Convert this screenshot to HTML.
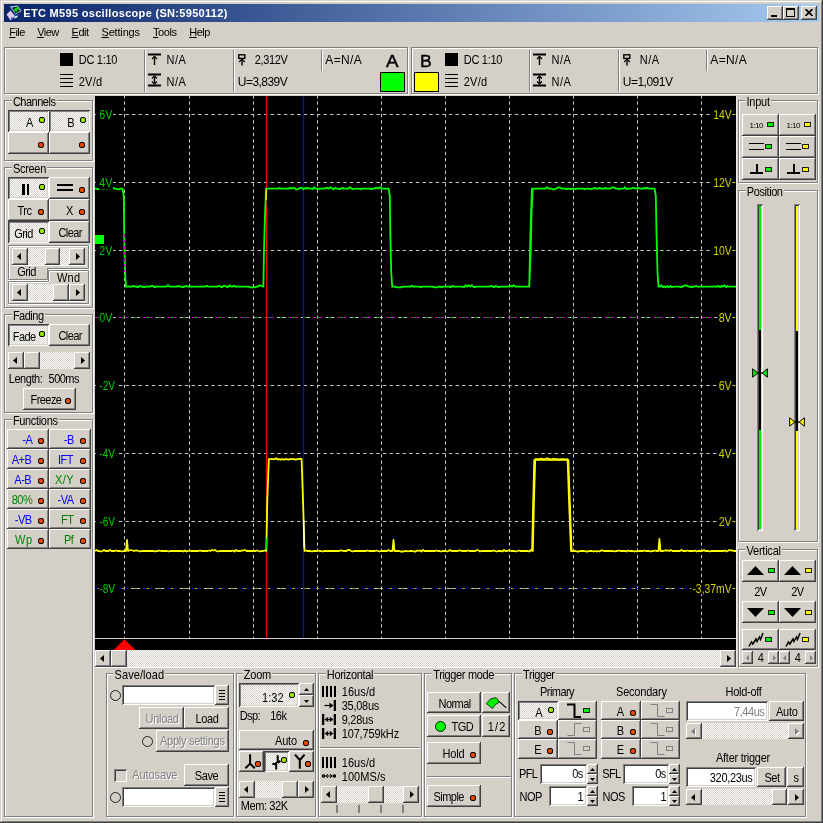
<!DOCTYPE html>
<html lang="en"><head><meta charset="utf-8"><title>ETC M595 oscilloscope</title>
<style>
*{box-sizing:border-box;margin:0;padding:0}
html,body{width:823px;height:823px;overflow:hidden}
body{background:#d4d0c8;font:11px "Liberation Sans",sans-serif;color:#000;position:relative}
div,span,svg,i{position:absolute;display:block}
.t{white-space:nowrap;font-style:normal}
u{text-decoration:underline}
.b{background:#d4d0c8;box-shadow:inset -1px -1px #404040,inset 1px 1px #fff,inset -2px -2px #808080,inset 2px 2px #d4d0c8}
.p{background:repeating-conic-gradient(#fff 0% 25%,#d4d0c8 0% 50%) 0 0/2px 2px;box-shadow:inset 1px 1px #404040,inset -1px -1px #fff,inset 2px 2px #808080,inset -2px -2px #d4d0c8}
.k{background:repeating-conic-gradient(#fff 0% 25%,#d4d0c8 0% 50%) 0 0/2px 2px}
.e{background:#fff;box-shadow:inset 1px 1px #808080,inset -1px -1px #fff,inset 2px 2px #404040,inset -2px -2px #d4d0c8}
.g{border:1px solid #808080;box-shadow:1px 1px #fff,inset 1px 1px #fff}
.l{width:6px;height:6px;border:1px solid #000;border-radius:2px}
.r{border:1px solid #202020}
#w{left:0;top:0;width:823px;height:823px;will-change:transform}
.vs{width:1px;background:#808080;box-shadow:1px 0 #fff}
.hs{height:1px;background:#808080;box-shadow:0 1px #fff}
</style></head>
<body>
<div id="w">
<div style="left:0px;top:0px;width:823px;height:823px;box-shadow:inset -1px -1px #404040,inset 1px 1px #d4d0c8,inset -2px -2px #808080,inset 2px 2px #fff"></div>
<div style="left:4px;top:4px;width:815px;height:18px;background:linear-gradient(to right,#0a246a,#a6caf0)"></div>
<svg style="left:6px;top:5px" width="16" height="16" viewBox="0 0 16 16"><polygon points="0.5,9.5 4.5,5.5 9,11 4.5,15.5" fill="#d8cdf0"/><polygon points="9,11 12.5,10.5 10.5,13 8,13.5" fill="#cfe4ff"/><polygon points="4,1.5 11.5,0.5 15.5,6 9.5,9.5" fill="#a8cdf8"/><polygon points="6,2.5 11,1.8 14,6 9.5,8.5" fill="#0a1408"/><path d="M8.2,6.2 L9.5,4.2 L10.2,5.6 L11.6,2.8 L12.2,4.4" stroke="#00e000" stroke-width="1.6" fill="none"/><rect x="5" y="12.5" width="1.3" height="1.3" fill="#2a10ff"/></svg>
<span class="t" style="left:23.30px;top:7px;line-height:13px;color:#fff;font-weight:bold;letter-spacing:0.31px;">ETC M595 oscilloscope (SN:5950112)</span>
<div class="b" style="left:767px;top:6px;width:16px;height:14px;"></div>
<div class="b" style="left:783px;top:6px;width:16px;height:14px;"></div>
<div class="b" style="left:801px;top:6px;width:16px;height:14px;"></div>
<div style="left:771px;top:15px;width:6px;height:2px;background:#000"></div>
<div style="left:786px;top:8px;width:9px;height:9px;border:1px solid #000;border-top-width:2px"></div>
<svg style="left:805px;top:9px" width="8" height="7"><path d="M0.5,0 L7.5,7 M7.5,0 L0.5,7" stroke="#000" stroke-width="1.6"/></svg>
<span class="t" style="left:9.25px;top:26px;line-height:13px;letter-spacing:-0.55px;"><u>F</u>ile</span>
<span class="t" style="left:37.20px;top:26px;line-height:13px;letter-spacing:-0.55px;"><u>V</u>iew</span>
<span class="t" style="left:71.60px;top:26px;line-height:13px;letter-spacing:-0.53px;"><u>E</u>dit</span>
<span class="t" style="left:101.50px;top:26px;line-height:13px;letter-spacing:-0.18px;"><u>S</u>ettings</span>
<span class="t" style="left:153.00px;top:26px;line-height:13px;letter-spacing:-0.41px;"><u>T</u>ools</span>
<span class="t" style="left:189.36px;top:26px;line-height:13px;letter-spacing:-0.55px;"><u>H</u>elp</span>
<div class="g" style="left:4px;top:47px;width:404px;height:47px;"></div>
<div class="g" style="left:411px;top:47px;width:407px;height:47px;"></div>
<div style="left:60px;top:53px;width:13px;height:13px;background:#000"></div>
<div style="left:60px;top:74px;width:13px;height:1px;background:#000"></div>
<div style="left:60px;top:78px;width:13px;height:1px;background:#000"></div>
<div style="left:60px;top:82px;width:13px;height:1px;background:#000"></div>
<div style="left:60px;top:86px;width:13px;height:1px;background:#000"></div>
<span class="t" style="left:78.80px;top:54px;line-height:13px;letter-spacing:-0.30px;transform:scaleY(1.125);transform-origin:0 10px;">DC 1:10</span>
<span class="t" style="left:78.80px;top:76px;line-height:13px;letter-spacing:0.19px;transform:scaleY(1.125);transform-origin:0 10px;">2V/d</span>
<div class="vs" style="left:144px;top:50px;width:1px;height:42px;"></div>
<svg style="left:148px;top:53px" width="13" height="13"><path d="M0,1.5 H13" stroke="#000" stroke-width="2"/><path d="M6.5,3 V12" stroke="#000" stroke-width="1.4"/><path d="M4,6 L6.5,3.4 L9,6" stroke="#000" stroke-width="1.3" fill="none"/></svg>
<svg style="left:148px;top:73px" width="13" height="14"><path d="M0,1.5 H13 M0,12.5 H13" stroke="#000" stroke-width="2"/><path d="M6.5,3 V11" stroke="#000" stroke-width="1.4"/><path d="M4,5.5 L6.5,3 L9,5.5 M4,8.5 L6.5,11 L9,8.5" stroke="#000" stroke-width="1.2" fill="none"/></svg>
<span class="t" style="left:166.50px;top:54px;line-height:13px;letter-spacing:0.56px;transform:scaleY(1.125);transform-origin:0 10px;">N/A</span>
<span class="t" style="left:166.50px;top:76px;line-height:13px;letter-spacing:0.56px;transform:scaleY(1.125);transform-origin:0 10px;">N/A</span>
<div class="vs" style="left:233px;top:50px;width:1px;height:42px;"></div>
<svg style="left:238px;top:54px" width="8" height="12"><rect x="0.8" y="0.8" width="6" height="3.6" fill="none" stroke="#000" stroke-width="1.4"/><path d="M4,4 V11.5" stroke="#000" stroke-width="1.4"/><path d="M1.2,8 L4,5.2 L6.8,8" stroke="#000" stroke-width="1.2" fill="none"/></svg>
<span class="t" style="left:254.70px;top:54px;line-height:13px;letter-spacing:-0.35px;transform:scaleY(1.125);transform-origin:0 10px;">2,312V</span>
<span class="t" style="left:237.80px;top:75px;line-height:14px;font-size:12px;letter-spacing:-0.54px;">U=3,839V</span>
<div class="vs" style="left:321px;top:50px;width:1px;height:21px;"></div>
<span class="t" style="left:325.30px;top:53px;line-height:14px;font-size:12px;letter-spacing:0.38px;">A=N/A</span>
<div style="left:445px;top:53px;width:13px;height:13px;background:#000"></div>
<div style="left:445px;top:74px;width:13px;height:1px;background:#000"></div>
<div style="left:445px;top:78px;width:13px;height:1px;background:#000"></div>
<div style="left:445px;top:82px;width:13px;height:1px;background:#000"></div>
<div style="left:445px;top:86px;width:13px;height:1px;background:#000"></div>
<span class="t" style="left:463.80px;top:54px;line-height:13px;letter-spacing:-0.30px;transform:scaleY(1.125);transform-origin:0 10px;">DC 1:10</span>
<span class="t" style="left:463.80px;top:76px;line-height:13px;letter-spacing:0.19px;transform:scaleY(1.125);transform-origin:0 10px;">2V/d</span>
<div class="vs" style="left:529px;top:50px;width:1px;height:42px;"></div>
<svg style="left:533px;top:53px" width="13" height="13"><path d="M0,1.5 H13" stroke="#000" stroke-width="2"/><path d="M6.5,3 V12" stroke="#000" stroke-width="1.4"/><path d="M4,6 L6.5,3.4 L9,6" stroke="#000" stroke-width="1.3" fill="none"/></svg>
<svg style="left:533px;top:73px" width="13" height="14"><path d="M0,1.5 H13 M0,12.5 H13" stroke="#000" stroke-width="2"/><path d="M6.5,3 V11" stroke="#000" stroke-width="1.4"/><path d="M4,5.5 L6.5,3 L9,5.5 M4,8.5 L6.5,11 L9,8.5" stroke="#000" stroke-width="1.2" fill="none"/></svg>
<span class="t" style="left:551.50px;top:54px;line-height:13px;letter-spacing:0.56px;transform:scaleY(1.125);transform-origin:0 10px;">N/A</span>
<span class="t" style="left:551.50px;top:76px;line-height:13px;letter-spacing:0.56px;transform:scaleY(1.125);transform-origin:0 10px;">N/A</span>
<div class="vs" style="left:618px;top:50px;width:1px;height:42px;"></div>
<svg style="left:623px;top:54px" width="8" height="12"><rect x="0.8" y="0.8" width="6" height="3.6" fill="none" stroke="#000" stroke-width="1.4"/><path d="M4,4 V11.5" stroke="#000" stroke-width="1.4"/><path d="M1.2,8 L4,5.2 L6.8,8" stroke="#000" stroke-width="1.2" fill="none"/></svg>
<span class="t" style="left:639.70px;top:54px;line-height:13px;letter-spacing:0.56px;transform:scaleY(1.125);transform-origin:0 10px;">N/A</span>
<span class="t" style="left:622.80px;top:75px;line-height:14px;font-size:12px;letter-spacing:-0.51px;">U=1,091V</span>
<div class="vs" style="left:706px;top:50px;width:1px;height:21px;"></div>
<span class="t" style="left:710.30px;top:53px;line-height:14px;font-size:12px;letter-spacing:0.38px;">A=N/A</span>
<span class="t" style="left:386.00px;top:52px;line-height:19px;font-size:17px;-webkit-text-stroke:0.45px #000;transform:scaleX(1.1);transform-origin:0 0;">A</span>
<span class="t" style="left:419.60px;top:52px;line-height:19px;font-size:17px;-webkit-text-stroke:0.45px #000;transform:scaleX(1.03);transform-origin:0 0;">B</span>
<div style="left:380px;top:72px;width:25px;height:20px;background:#00ff00;border:1px solid #000"></div>
<div style="left:414px;top:72px;width:25px;height:20px;background:#ffff00;border:1px solid #000"></div>
<div class="g" style="left:4px;top:100px;width:89px;height:61px;"></div>
<div style="left:11.7px;top:99px;width:45.3px;height:3px;background:#d4d0c8"></div>
<span class="t" style="left:12.90px;top:96px;line-height:13px;letter-spacing:-0.49px;transform:scaleY(1.125);transform-origin:0 10px;">Channels</span>
<div class="p" style="left:8px;top:110px;width:41px;height:22px;"></div>
<span class="t" style="left:26.00px;top:117px;line-height:13px;transform:scaleY(1.125);transform-origin:0 10px;">A</span>
<i class="l" style="left:39px;top:117px;background:#99e600"></i>
<div class="p" style="left:49px;top:110px;width:41px;height:22px;"></div>
<span class="t" style="left:67.30px;top:117px;line-height:13px;transform:scaleY(1.125);transform-origin:0 10px;">B</span>
<i class="l" style="left:80px;top:117px;background:#99e600"></i>
<div class="b" style="left:8px;top:132px;width:41px;height:22px;"></div>
<i class="l" style="left:38px;top:142px;background:#e64a00"></i>
<div class="b" style="left:49px;top:132px;width:41px;height:22px;"></div>
<i class="l" style="left:79px;top:142px;background:#e64a00"></i>
<div class="g" style="left:4px;top:167px;width:89px;height:141px;"></div>
<div style="left:11.7px;top:166px;width:35.6px;height:3px;background:#d4d0c8"></div>
<span class="t" style="left:12.90px;top:163px;line-height:13px;letter-spacing:-0.30px;transform:scaleY(1.125);transform-origin:0 10px;">Screen</span>
<div class="p" style="left:8px;top:177px;width:41px;height:22px;"></div>
<i class="l" style="left:39px;top:184px;background:#99e600"></i>
<div style="left:22px;top:183.5px;width:2.6px;height:11.5px;background:#000"></div>
<div style="left:26.5px;top:183.5px;width:2.6px;height:11.5px;background:#000"></div>
<div class="b" style="left:49px;top:177px;width:41px;height:22px;"></div>
<i class="l" style="left:79px;top:187px;background:#e64a00"></i>
<div style="left:57px;top:184px;width:16px;height:2px;background:#000"></div>
<div style="left:57px;top:189px;width:16px;height:2px;background:#000"></div>
<div class="b" style="left:8px;top:199px;width:41px;height:22px;"></div>
<span class="t" style="left:17.50px;top:205px;line-height:13px;letter-spacing:-0.50px;transform:scaleY(1.125);transform-origin:0 10px;">Trc</span>
<i class="l" style="left:38px;top:209px;background:#e64a00"></i>
<div class="b" style="left:49px;top:199px;width:41px;height:22px;"></div>
<span class="t" style="left:66.00px;top:205px;line-height:13px;transform:scaleY(1.125);transform-origin:0 10px;">X</span>
<i class="l" style="left:79px;top:209px;background:#e64a00"></i>
<div class="p" style="left:8px;top:221px;width:41px;height:22px;"></div>
<span class="t" style="left:14.25px;top:228px;line-height:13px;letter-spacing:-0.55px;transform:scaleY(1.125);transform-origin:0 10px;">Grid</span>
<i class="l" style="left:39px;top:228px;background:#99e600"></i>
<div class="b" style="left:49px;top:221px;width:41px;height:22px;"></div>
<span class="t" style="left:58.38px;top:227px;line-height:13px;letter-spacing:-0.55px;transform:scaleY(1.125);transform-origin:0 10px;">Clear</span>
<svg style="left:8px;top:245px" width="83" height="62"><path d="M0.5,0.5 H80.5 V23.5 H39.5 V34.5 H0.5 Z" fill="none" stroke="#808080"/><path d="M1.5,34 V1.5 H80 M81.5,0 V24.5 H40.5 V35.5 H0" fill="none" stroke="#fff"/><path d="M40.5,25.5 H80.5 V58.5 H0.5 V36.5 H40.5 Z" fill="none" stroke="#808080"/><path d="M41.5,36.5 V26.5 H80 M1.5,58 V37.5 H41 M81.5,25 V59.5 H0" fill="none" stroke="#fff"/></svg>
<div class="k" style="left:12px;top:248px;width:73px;height:17px;"></div>
<div class="b" style="left:12px;top:248px;width:16px;height:17px;"></div>
<div class="b" style="left:69px;top:248px;width:16px;height:17px;"></div>
<svg style="left:17px;top:253.0px" width="4" height="7"><polygon points="4,0 0,3.5 4,7" fill="#000"/></svg>
<svg style="left:76px;top:253.0px" width="4" height="7"><polygon points="0,0 4,3.5 0,7" fill="#000"/></svg>
<div class="b" style="left:45px;top:248px;width:15px;height:17px;"></div>
<div style="left:12px;top:265px;width:74px;height:1px;background:#fff"></div>
<span class="t" style="left:17.25px;top:266px;line-height:13px;letter-spacing:-0.55px;transform:scaleY(1.125);transform-origin:0 10px;">Grid</span>
<span class="t" style="left:57.00px;top:272px;line-height:13px;letter-spacing:0.19px;transform:scaleY(1.125);transform-origin:0 10px;">Wnd</span>
<div class="k" style="left:12px;top:284px;width:73px;height:17px;"></div>
<div class="b" style="left:12px;top:284px;width:16px;height:17px;"></div>
<div class="b" style="left:69px;top:284px;width:16px;height:17px;"></div>
<svg style="left:17px;top:289.0px" width="4" height="7"><polygon points="4,0 0,3.5 4,7" fill="#000"/></svg>
<svg style="left:76px;top:289.0px" width="4" height="7"><polygon points="0,0 4,3.5 0,7" fill="#000"/></svg>
<div class="b" style="left:53px;top:284px;width:16px;height:17px;"></div>
<div style="left:12px;top:301px;width:74px;height:1px;background:#fff"></div>
<div class="g" style="left:4px;top:314px;width:89px;height:99px;"></div>
<div style="left:11.7px;top:313px;width:33.3px;height:3px;background:#d4d0c8"></div>
<span class="t" style="left:12.90px;top:310px;line-height:13px;letter-spacing:-0.50px;transform:scaleY(1.125);transform-origin:0 10px;">Fading</span>
<div class="p" style="left:8px;top:324px;width:41px;height:22px;"></div>
<span class="t" style="left:12.76px;top:331px;line-height:13px;letter-spacing:-0.55px;transform:scaleY(1.125);transform-origin:0 10px;">Fade</span>
<i class="l" style="left:39px;top:331px;background:#99e600"></i>
<div class="b" style="left:49px;top:324px;width:41px;height:22px;"></div>
<span class="t" style="left:58.38px;top:330px;line-height:13px;letter-spacing:-0.55px;transform:scaleY(1.125);transform-origin:0 10px;">Clear</span>
<div class="k" style="left:8px;top:352px;width:82px;height:17px;"></div>
<div class="b" style="left:8px;top:352px;width:16px;height:17px;"></div>
<div class="b" style="left:74px;top:352px;width:16px;height:17px;"></div>
<svg style="left:13px;top:357.0px" width="4" height="7"><polygon points="4,0 0,3.5 4,7" fill="#000"/></svg>
<svg style="left:81px;top:357.0px" width="4" height="7"><polygon points="0,0 4,3.5 0,7" fill="#000"/></svg>
<div class="b" style="left:24px;top:352px;width:16px;height:17px;"></div>
<span class="t" style="left:8.80px;top:373px;line-height:13px;letter-spacing:-0.46px;transform:scaleY(1.125);transform-origin:0 10px;">Length:</span>
<span class="t" style="left:48.60px;top:373px;line-height:13px;letter-spacing:-0.55px;transform:scaleY(1.125);transform-origin:0 10px;">500ms</span>
<div class="b" style="left:23px;top:388px;width:53px;height:22px;"></div>
<span class="t" style="left:30.50px;top:394px;line-height:13px;letter-spacing:-0.55px;transform:scaleY(1.125);transform-origin:0 10px;">Freeze</span>
<i class="l" style="left:65px;top:398px;background:#e64a00"></i>
<div class="g" style="left:4px;top:419px;width:89px;height:398px;"></div>
<div style="left:11.7px;top:418px;width:47.3px;height:3px;background:#d4d0c8"></div>
<span class="t" style="left:12.90px;top:415px;line-height:13px;letter-spacing:-0.33px;transform:scaleY(1.125);transform-origin:0 10px;">Functions</span>
<div class="b" style="left:7px;top:429px;width:42px;height:20px;"></div>
<span class="t" style="left:22.27px;top:434px;line-height:13px;color:#0000ff;letter-spacing:-0.55px;transform:scaleY(1.125);transform-origin:0 10px;">-A</span>
<i class="l" style="left:38px;top:438px;background:#e64a00"></i>
<div class="b" style="left:49px;top:429px;width:42px;height:20px;"></div>
<span class="t" style="left:63.77px;top:434px;line-height:13px;color:#0000ff;letter-spacing:-0.55px;transform:scaleY(1.125);transform-origin:0 10px;">-B</span>
<i class="l" style="left:80px;top:438px;background:#e64a00"></i>
<div class="b" style="left:7px;top:449px;width:42px;height:20px;"></div>
<span class="t" style="left:11.74px;top:454px;line-height:13px;color:#0000ff;letter-spacing:-0.55px;transform:scaleY(1.125);transform-origin:0 10px;">A+B</span>
<i class="l" style="left:38px;top:458px;background:#e64a00"></i>
<div class="b" style="left:49px;top:449px;width:42px;height:20px;"></div>
<span class="t" style="left:58.05px;top:454px;line-height:13px;color:#0000ff;letter-spacing:-0.55px;transform:scaleY(1.125);transform-origin:0 10px;">IFT</span>
<i class="l" style="left:80px;top:458px;background:#e64a00"></i>
<div class="b" style="left:7px;top:469px;width:42px;height:20px;"></div>
<span class="t" style="left:14.36px;top:474px;line-height:13px;color:#0000ff;letter-spacing:-0.55px;transform:scaleY(1.125);transform-origin:0 10px;">A-B</span>
<i class="l" style="left:38px;top:478px;background:#e64a00"></i>
<div class="b" style="left:49px;top:469px;width:42px;height:20px;"></div>
<span class="t" style="left:55.00px;top:474px;line-height:13px;color:#008000;letter-spacing:0.38px;transform:scaleY(1.125);transform-origin:0 10px;">X/Y</span>
<i class="l" style="left:80px;top:478px;background:#e64a00"></i>
<div class="b" style="left:7px;top:489px;width:42px;height:20px;"></div>
<span class="t" style="left:11.80px;top:494px;line-height:13px;color:#008000;letter-spacing:-0.55px;transform:scaleY(1.125);transform-origin:0 10px;">80%</span>
<i class="l" style="left:38px;top:498px;background:#e64a00"></i>
<div class="b" style="left:49px;top:489px;width:42px;height:20px;"></div>
<span class="t" style="left:57.50px;top:494px;line-height:13px;color:#0000ff;letter-spacing:-0.50px;transform:scaleY(1.125);transform-origin:0 10px;">-VA</span>
<i class="l" style="left:80px;top:498px;background:#e64a00"></i>
<div class="b" style="left:7px;top:509px;width:42px;height:20px;"></div>
<span class="t" style="left:14.86px;top:514px;line-height:13px;color:#0000ff;letter-spacing:-0.55px;transform:scaleY(1.125);transform-origin:0 10px;">-VB</span>
<i class="l" style="left:38px;top:518px;background:#e64a00"></i>
<div class="b" style="left:49px;top:509px;width:42px;height:20px;"></div>
<span class="t" style="left:61.02px;top:514px;line-height:13px;color:#008000;letter-spacing:-0.55px;transform:scaleY(1.125);transform-origin:0 10px;">FT</span>
<i class="l" style="left:80px;top:518px;background:#e64a00"></i>
<div class="b" style="left:7px;top:529px;width:42px;height:20px;"></div>
<span class="t" style="left:15.00px;top:534px;line-height:13px;color:#008000;letter-spacing:0.50px;transform:scaleY(1.125);transform-origin:0 10px;">Wp</span>
<i class="l" style="left:38px;top:538px;background:#e64a00"></i>
<div class="b" style="left:49px;top:529px;width:42px;height:20px;"></div>
<span class="t" style="left:64.03px;top:534px;line-height:13px;color:#008000;letter-spacing:-0.55px;transform:scaleY(1.125);transform-origin:0 10px;">Pf</span>
<i class="l" style="left:80px;top:538px;background:#e64a00"></i>
<div class="g" style="left:738px;top:100px;width:80px;height:83px;"></div>
<div style="left:745.3px;top:99px;width:25.7px;height:3px;background:#d4d0c8"></div>
<span class="t" style="left:746.50px;top:96px;line-height:13px;letter-spacing:-0.25px;transform:scaleY(1.125);transform-origin:0 10px;">Input</span>
<div class="b" style="left:742px;top:114px;width:37px;height:22px;"></div>
<div class="b" style="left:742px;top:136px;width:37px;height:22px;"></div>
<div class="b" style="left:742px;top:158px;width:37px;height:22px;"></div>
<span class="t" style="left:749.46px;top:121px;line-height:10px;font-size:8px;letter-spacing:-0.55px;">1:10</span>
<i class="r" style="left:767px;top:122px;width:7px;height:5px;background:#00f000"></i>
<div style="left:749px;top:143px;width:15px;height:1.3px;background:#000"></div>
<div style="left:749px;top:149px;width:15px;height:1.3px;background:#000"></div>
<i class="r" style="left:765px;top:143.6px;width:7px;height:5.8px;background:#00f000"></i>
<div style="left:756px;top:164px;width:2px;height:9px;background:#000"></div>
<div style="left:750px;top:172px;width:13px;height:2.4px;background:#000"></div>
<i class="r" style="left:765px;top:167px;width:7px;height:5px;background:#00f000"></i>
<div class="b" style="left:779px;top:114px;width:37px;height:22px;"></div>
<div class="b" style="left:779px;top:136px;width:37px;height:22px;"></div>
<div class="b" style="left:779px;top:158px;width:37px;height:22px;"></div>
<span class="t" style="left:786.46px;top:121px;line-height:10px;font-size:8px;letter-spacing:-0.55px;">1:10</span>
<i class="r" style="left:804px;top:122px;width:7px;height:5px;background:#ffff00"></i>
<div style="left:786px;top:143px;width:15px;height:1.3px;background:#000"></div>
<div style="left:786px;top:149px;width:15px;height:1.3px;background:#000"></div>
<i class="r" style="left:802px;top:143.6px;width:7px;height:5.8px;background:#ffff00"></i>
<div style="left:793px;top:164px;width:2px;height:9px;background:#000"></div>
<div style="left:787px;top:172px;width:13px;height:2.4px;background:#000"></div>
<i class="r" style="left:802px;top:167px;width:7px;height:5px;background:#ffff00"></i>
<div class="g" style="left:738px;top:190px;width:80px;height:352px;"></div>
<div style="left:745.6px;top:189px;width:38.4px;height:3px;background:#d4d0c8"></div>
<span class="t" style="left:746.80px;top:186px;line-height:13px;letter-spacing:-0.42px;transform:scaleY(1.125);transform-origin:0 10px;">Position</span>
<div class="e" style="left:757px;top:204px;width:6px;height:327px;background:#00e800"></div>
<div style="left:759px;top:330px;width:2px;height:100px;background:#000"></div>
<svg style="left:752px;top:367.6px" width="16" height="10"><polygon points="0.6,0.8 5.8,5 0.6,9.2" fill="#00e800" stroke="#000" stroke-width="1"/><polygon points="15.4,0.8 10.2,5 15.4,9.2" fill="#00e800" stroke="#000" stroke-width="1"/><path d="M5.5,5 H10.5" stroke="#000" stroke-width="1.2"/></svg>
<div class="e" style="left:794px;top:204px;width:6px;height:327px;background:#ffff00"></div>
<div style="left:796px;top:331px;width:2px;height:100px;background:#000"></div>
<svg style="left:789px;top:417.4px" width="16" height="10"><polygon points="0.6,0.8 5.8,5 0.6,9.2" fill="#ffff00" stroke="#000" stroke-width="1"/><polygon points="15.4,0.8 10.2,5 15.4,9.2" fill="#ffff00" stroke="#000" stroke-width="1"/><path d="M5.5,5 H10.5" stroke="#000" stroke-width="1.2"/></svg>
<div class="g" style="left:738px;top:549px;width:80px;height:118px;"></div>
<div style="left:745.3px;top:548px;width:36.7px;height:3px;background:#d4d0c8"></div>
<span class="t" style="left:746.50px;top:545px;line-height:13px;letter-spacing:-0.23px;transform:scaleY(1.125);transform-origin:0 10px;">Vertical</span>
<div class="b" style="left:742px;top:560px;width:37px;height:22px;"></div>
<svg style="left:747px;top:566px" width="17" height="9"><polygon points="0,9 8.5,0 17,9" fill="#000"/></svg>
<i class="r" style="left:768px;top:568px;width:7px;height:5px;background:#00f000"></i>
<span class="t" style="left:754.27px;top:586px;line-height:13px;letter-spacing:-0.55px;transform:scaleY(1.125);transform-origin:0 10px;">2V</span>
<div class="b" style="left:742px;top:601px;width:37px;height:22px;"></div>
<svg style="left:747px;top:608px" width="17" height="9"><polygon points="0,0 8.5,9 17,0" fill="#000"/></svg>
<i class="r" style="left:768px;top:609.5px;width:7px;height:5px;background:#00f000"></i>
<div class="b" style="left:742px;top:629px;width:37px;height:21px;"></div>
<svg style="left:748px;top:632px" width="17" height="16"><path d="M1,14.5 L3.5,10 L4.8,12 L8,7 L9,9.5 L11.5,5 L12.5,7.5 L15,1" stroke="#000" stroke-width="1.5" fill="none"/></svg>
<i class="r" style="left:765px;top:637px;width:7px;height:5px;background:#00f000"></i>
<div class="b" style="left:742px;top:651px;width:11px;height:13px;"></div>
<div class="b" style="left:768px;top:651px;width:11px;height:13px;"></div>
<svg style="left:745.5px;top:654.5px" width="3" height="6"><polygon points="3,0 0,3.0 3,6" fill="#808080"/></svg>
<svg style="left:772.5px;top:654.5px" width="3" height="6"><polygon points="0,0 3,3.0 0,6" fill="#808080"/></svg>
<span class="t" style="left:757.70px;top:652px;line-height:13px;transform:scaleY(1.125);transform-origin:0 10px;">4</span>
<div class="b" style="left:779px;top:560px;width:37px;height:22px;"></div>
<svg style="left:784px;top:566px" width="17" height="9"><polygon points="0,9 8.5,0 17,9" fill="#000"/></svg>
<i class="r" style="left:805px;top:568px;width:7px;height:5px;background:#ffff00"></i>
<span class="t" style="left:791.27px;top:586px;line-height:13px;letter-spacing:-0.55px;transform:scaleY(1.125);transform-origin:0 10px;">2V</span>
<div class="b" style="left:779px;top:601px;width:37px;height:22px;"></div>
<svg style="left:784px;top:608px" width="17" height="9"><polygon points="0,0 8.5,9 17,0" fill="#000"/></svg>
<i class="r" style="left:805px;top:609.5px;width:7px;height:5px;background:#ffff00"></i>
<div class="b" style="left:779px;top:629px;width:37px;height:21px;"></div>
<svg style="left:785px;top:632px" width="17" height="16"><path d="M1,14.5 L3.5,10 L4.8,12 L8,7 L9,9.5 L11.5,5 L12.5,7.5 L15,1" stroke="#000" stroke-width="1.5" fill="none"/></svg>
<i class="r" style="left:802px;top:637px;width:7px;height:5px;background:#ffff00"></i>
<div class="b" style="left:779px;top:651px;width:11px;height:13px;"></div>
<div class="b" style="left:805px;top:651px;width:11px;height:13px;"></div>
<svg style="left:782.5px;top:654.5px" width="3" height="6"><polygon points="3,0 0,3.0 3,6" fill="#808080"/></svg>
<svg style="left:809.5px;top:654.5px" width="3" height="6"><polygon points="0,0 3,3.0 0,6" fill="#808080"/></svg>
<span class="t" style="left:794.70px;top:652px;line-height:13px;transform:scaleY(1.125);transform-origin:0 10px;">4</span>
<svg style="left:95px;top:96px" width="641" height="555" viewBox="95 96 641 555" font-family="Liberation Sans, sans-serif" font-size="12.3"><rect x="95" y="96" width="641" height="542" fill="#000"/><rect x="95" y="638" width="641" height="1" fill="#d4d0c8"/><rect x="95" y="639" width="641" height="11" fill="#000"/><path d="M124.5,96 V638" stroke="#c8c8c8" stroke-dasharray="3.4 2.9" stroke-dashoffset="1"/><path d="M189.5,96 V638" stroke="#c8c8c8" stroke-dasharray="3.4 2.9" stroke-dashoffset="1"/><path d="M253.5,96 V638" stroke="#c8c8c8" stroke-dasharray="3.4 2.9" stroke-dashoffset="1"/><path d="M317.5,96 V638" stroke="#c8c8c8" stroke-dasharray="3.4 2.9" stroke-dashoffset="1"/><path d="M381.5,96 V638" stroke="#c8c8c8" stroke-dasharray="3.4 2.9" stroke-dashoffset="1"/><path d="M445.5,96 V638" stroke="#c8c8c8" stroke-dasharray="3.4 2.9" stroke-dashoffset="1"/><path d="M509.5,96 V638" stroke="#c8c8c8" stroke-dasharray="3.4 2.9" stroke-dashoffset="1"/><path d="M573.5,96 V638" stroke="#c8c8c8" stroke-dasharray="3.4 2.9" stroke-dashoffset="1"/><path d="M637.5,96 V638" stroke="#c8c8c8" stroke-dasharray="3.4 2.9" stroke-dashoffset="1"/><path d="M701.5,96 V638" stroke="#c8c8c8" stroke-dasharray="3.4 2.9" stroke-dashoffset="1"/><path d="M95,114.5 H736" stroke="#c8c8c8" stroke-dasharray="3.4 3.2" stroke-dashoffset="2.5"/><path d="M95,182.5 H736" stroke="#c8c8c8" stroke-dasharray="3.4 3.2" stroke-dashoffset="2.5"/><path d="M95,250.5 H736" stroke="#c8c8c8" stroke-dasharray="3.4 3.2" stroke-dashoffset="2.5"/><path d="M95,385.5 H736" stroke="#c8c8c8" stroke-dasharray="3.4 3.2" stroke-dashoffset="2.5"/><path d="M95,453.5 H736" stroke="#c8c8c8" stroke-dasharray="3.4 3.2" stroke-dashoffset="2.5"/><path d="M95,521.5 H736" stroke="#c8c8c8" stroke-dasharray="3.4 3.2" stroke-dashoffset="2.5"/><path d="M94.6,317.5 h3" stroke="#d000d0"/><path d="M97.6,317.5 h3" stroke="#00a000"/><path d="M100.6,317.5 h3" stroke="#d000d0"/><path d="M106.8,317.5 h3" stroke="#c8c8c8"/><path d="M109.8,317.5 h3" stroke="#00a000"/><path d="M112.8,317.5 h3" stroke="#c8c8c8"/><path d="M118.9,317.5 h3" stroke="#d000d0"/><path d="M121.9,317.5 h3" stroke="#00a000"/><path d="M124.9,317.5 h3" stroke="#d000d0"/><path d="M131.1,317.5 h3" stroke="#c8c8c8"/><path d="M134.1,317.5 h3" stroke="#00a000"/><path d="M137.1,317.5 h3" stroke="#c8c8c8"/><path d="M143.2,317.5 h3" stroke="#d000d0"/><path d="M146.2,317.5 h3" stroke="#00a000"/><path d="M149.2,317.5 h3" stroke="#d000d0"/><path d="M155.4,317.5 h3" stroke="#c8c8c8"/><path d="M158.4,317.5 h3" stroke="#00a000"/><path d="M161.4,317.5 h3" stroke="#c8c8c8"/><path d="M167.5,317.5 h3" stroke="#d000d0"/><path d="M170.5,317.5 h3" stroke="#00a000"/><path d="M173.5,317.5 h3" stroke="#d000d0"/><path d="M179.7,317.5 h3" stroke="#c8c8c8"/><path d="M182.7,317.5 h3" stroke="#00a000"/><path d="M185.7,317.5 h3" stroke="#c8c8c8"/><path d="M191.8,317.5 h3" stroke="#d000d0"/><path d="M194.8,317.5 h3" stroke="#00a000"/><path d="M197.8,317.5 h3" stroke="#d000d0"/><path d="M204.0,317.5 h3" stroke="#c8c8c8"/><path d="M207.0,317.5 h3" stroke="#00a000"/><path d="M210.0,317.5 h3" stroke="#c8c8c8"/><path d="M216.1,317.5 h3" stroke="#d000d0"/><path d="M219.1,317.5 h3" stroke="#00a000"/><path d="M222.1,317.5 h3" stroke="#d000d0"/><path d="M228.3,317.5 h3" stroke="#c8c8c8"/><path d="M231.3,317.5 h3" stroke="#00a000"/><path d="M234.3,317.5 h3" stroke="#c8c8c8"/><path d="M240.4,317.5 h3" stroke="#d000d0"/><path d="M243.4,317.5 h3" stroke="#00a000"/><path d="M246.4,317.5 h3" stroke="#d000d0"/><path d="M252.6,317.5 h3" stroke="#c8c8c8"/><path d="M255.6,317.5 h3" stroke="#00a000"/><path d="M258.6,317.5 h3" stroke="#c8c8c8"/><path d="M264.7,317.5 h3" stroke="#d000d0"/><path d="M267.7,317.5 h3" stroke="#00a000"/><path d="M270.7,317.5 h3" stroke="#d000d0"/><path d="M276.9,317.5 h3" stroke="#c8c8c8"/><path d="M279.9,317.5 h3" stroke="#00a000"/><path d="M282.9,317.5 h3" stroke="#c8c8c8"/><path d="M289.0,317.5 h3" stroke="#d000d0"/><path d="M292.0,317.5 h3" stroke="#00a000"/><path d="M295.0,317.5 h3" stroke="#d000d0"/><path d="M301.1,317.5 h3" stroke="#c8c8c8"/><path d="M304.1,317.5 h3" stroke="#00a000"/><path d="M307.1,317.5 h3" stroke="#c8c8c8"/><path d="M313.3,317.5 h3" stroke="#d000d0"/><path d="M316.3,317.5 h3" stroke="#00a000"/><path d="M319.3,317.5 h3" stroke="#d000d0"/><path d="M325.4,317.5 h3" stroke="#c8c8c8"/><path d="M328.4,317.5 h3" stroke="#00a000"/><path d="M331.4,317.5 h3" stroke="#c8c8c8"/><path d="M337.6,317.5 h3" stroke="#d000d0"/><path d="M340.6,317.5 h3" stroke="#00a000"/><path d="M343.6,317.5 h3" stroke="#d000d0"/><path d="M349.7,317.5 h3" stroke="#c8c8c8"/><path d="M352.7,317.5 h3" stroke="#00a000"/><path d="M355.7,317.5 h3" stroke="#c8c8c8"/><path d="M361.9,317.5 h3" stroke="#d000d0"/><path d="M364.9,317.5 h3" stroke="#00a000"/><path d="M367.9,317.5 h3" stroke="#d000d0"/><path d="M374.0,317.5 h3" stroke="#c8c8c8"/><path d="M377.0,317.5 h3" stroke="#00a000"/><path d="M380.0,317.5 h3" stroke="#c8c8c8"/><path d="M386.2,317.5 h3" stroke="#d000d0"/><path d="M389.2,317.5 h3" stroke="#00a000"/><path d="M392.2,317.5 h3" stroke="#d000d0"/><path d="M398.3,317.5 h3" stroke="#c8c8c8"/><path d="M401.3,317.5 h3" stroke="#00a000"/><path d="M404.3,317.5 h3" stroke="#c8c8c8"/><path d="M410.5,317.5 h3" stroke="#d000d0"/><path d="M413.5,317.5 h3" stroke="#00a000"/><path d="M416.5,317.5 h3" stroke="#d000d0"/><path d="M422.6,317.5 h3" stroke="#c8c8c8"/><path d="M425.6,317.5 h3" stroke="#00a000"/><path d="M428.6,317.5 h3" stroke="#c8c8c8"/><path d="M434.8,317.5 h3" stroke="#d000d0"/><path d="M437.8,317.5 h3" stroke="#00a000"/><path d="M440.8,317.5 h3" stroke="#d000d0"/><path d="M446.9,317.5 h3" stroke="#c8c8c8"/><path d="M449.9,317.5 h3" stroke="#00a000"/><path d="M452.9,317.5 h3" stroke="#c8c8c8"/><path d="M459.1,317.5 h3" stroke="#d000d0"/><path d="M462.1,317.5 h3" stroke="#00a000"/><path d="M465.1,317.5 h3" stroke="#d000d0"/><path d="M471.2,317.5 h3" stroke="#c8c8c8"/><path d="M474.2,317.5 h3" stroke="#00a000"/><path d="M477.2,317.5 h3" stroke="#c8c8c8"/><path d="M483.4,317.5 h3" stroke="#d000d0"/><path d="M486.4,317.5 h3" stroke="#00a000"/><path d="M489.4,317.5 h3" stroke="#d000d0"/><path d="M495.5,317.5 h3" stroke="#c8c8c8"/><path d="M498.5,317.5 h3" stroke="#00a000"/><path d="M501.5,317.5 h3" stroke="#c8c8c8"/><path d="M507.7,317.5 h3" stroke="#d000d0"/><path d="M510.7,317.5 h3" stroke="#00a000"/><path d="M513.7,317.5 h3" stroke="#d000d0"/><path d="M519.8,317.5 h3" stroke="#c8c8c8"/><path d="M522.8,317.5 h3" stroke="#00a000"/><path d="M525.8,317.5 h3" stroke="#c8c8c8"/><path d="M532.0,317.5 h3" stroke="#d000d0"/><path d="M535.0,317.5 h3" stroke="#00a000"/><path d="M538.0,317.5 h3" stroke="#d000d0"/><path d="M544.1,317.5 h3" stroke="#c8c8c8"/><path d="M547.1,317.5 h3" stroke="#00a000"/><path d="M550.1,317.5 h3" stroke="#c8c8c8"/><path d="M556.3,317.5 h3" stroke="#d000d0"/><path d="M559.3,317.5 h3" stroke="#00a000"/><path d="M562.3,317.5 h3" stroke="#d000d0"/><path d="M568.4,317.5 h3" stroke="#c8c8c8"/><path d="M571.4,317.5 h3" stroke="#00a000"/><path d="M574.4,317.5 h3" stroke="#c8c8c8"/><path d="M580.6,317.5 h3" stroke="#d000d0"/><path d="M583.6,317.5 h3" stroke="#00a000"/><path d="M586.6,317.5 h3" stroke="#d000d0"/><path d="M592.7,317.5 h3" stroke="#c8c8c8"/><path d="M595.7,317.5 h3" stroke="#00a000"/><path d="M598.7,317.5 h3" stroke="#c8c8c8"/><path d="M604.9,317.5 h3" stroke="#d000d0"/><path d="M607.9,317.5 h3" stroke="#00a000"/><path d="M610.9,317.5 h3" stroke="#d000d0"/><path d="M617.0,317.5 h3" stroke="#c8c8c8"/><path d="M620.0,317.5 h3" stroke="#00a000"/><path d="M623.0,317.5 h3" stroke="#c8c8c8"/><path d="M629.2,317.5 h3" stroke="#d000d0"/><path d="M632.2,317.5 h3" stroke="#00a000"/><path d="M635.2,317.5 h3" stroke="#d000d0"/><path d="M641.3,317.5 h3" stroke="#c8c8c8"/><path d="M644.3,317.5 h3" stroke="#00a000"/><path d="M647.3,317.5 h3" stroke="#c8c8c8"/><path d="M653.5,317.5 h3" stroke="#d000d0"/><path d="M656.5,317.5 h3" stroke="#00a000"/><path d="M659.5,317.5 h3" stroke="#d000d0"/><path d="M665.6,317.5 h3" stroke="#c8c8c8"/><path d="M668.6,317.5 h3" stroke="#00a000"/><path d="M671.6,317.5 h3" stroke="#c8c8c8"/><path d="M677.8,317.5 h3" stroke="#d000d0"/><path d="M680.8,317.5 h3" stroke="#00a000"/><path d="M683.8,317.5 h3" stroke="#d000d0"/><path d="M689.9,317.5 h3" stroke="#c8c8c8"/><path d="M692.9,317.5 h3" stroke="#00a000"/><path d="M695.9,317.5 h3" stroke="#c8c8c8"/><path d="M702.1,317.5 h3" stroke="#d000d0"/><path d="M705.1,317.5 h3" stroke="#00a000"/><path d="M708.1,317.5 h3" stroke="#d000d0"/><path d="M714.2,317.5 h3" stroke="#c8c8c8"/><path d="M717.2,317.5 h3" stroke="#00a000"/><path d="M720.2,317.5 h3" stroke="#c8c8c8"/><path d="M726.4,317.5 h3" stroke="#d000d0"/><path d="M729.4,317.5 h3" stroke="#00a000"/><path d="M732.4,317.5 h3" stroke="#d000d0"/><path d="M94.6,588.5 h3" stroke="#0000d8"/><path d="M97.6,588.5 h3" stroke="#b0a000"/><path d="M100.6,588.5 h3" stroke="#0000d8"/><path d="M106.8,588.5 h3" stroke="#c8c8c8"/><path d="M109.8,588.5 h3" stroke="#b0a000"/><path d="M112.8,588.5 h3" stroke="#c8c8c8"/><path d="M118.9,588.5 h3" stroke="#0000d8"/><path d="M121.9,588.5 h3" stroke="#b0a000"/><path d="M124.9,588.5 h3" stroke="#0000d8"/><path d="M131.1,588.5 h3" stroke="#c8c8c8"/><path d="M134.1,588.5 h3" stroke="#b0a000"/><path d="M137.1,588.5 h3" stroke="#c8c8c8"/><path d="M143.2,588.5 h3" stroke="#0000d8"/><path d="M146.2,588.5 h3" stroke="#b0a000"/><path d="M149.2,588.5 h3" stroke="#0000d8"/><path d="M155.4,588.5 h3" stroke="#c8c8c8"/><path d="M158.4,588.5 h3" stroke="#b0a000"/><path d="M161.4,588.5 h3" stroke="#c8c8c8"/><path d="M167.5,588.5 h3" stroke="#0000d8"/><path d="M170.5,588.5 h3" stroke="#b0a000"/><path d="M173.5,588.5 h3" stroke="#0000d8"/><path d="M179.7,588.5 h3" stroke="#c8c8c8"/><path d="M182.7,588.5 h3" stroke="#b0a000"/><path d="M185.7,588.5 h3" stroke="#c8c8c8"/><path d="M191.8,588.5 h3" stroke="#0000d8"/><path d="M194.8,588.5 h3" stroke="#b0a000"/><path d="M197.8,588.5 h3" stroke="#0000d8"/><path d="M204.0,588.5 h3" stroke="#c8c8c8"/><path d="M207.0,588.5 h3" stroke="#b0a000"/><path d="M210.0,588.5 h3" stroke="#c8c8c8"/><path d="M216.1,588.5 h3" stroke="#0000d8"/><path d="M219.1,588.5 h3" stroke="#b0a000"/><path d="M222.1,588.5 h3" stroke="#0000d8"/><path d="M228.3,588.5 h3" stroke="#c8c8c8"/><path d="M231.3,588.5 h3" stroke="#b0a000"/><path d="M234.3,588.5 h3" stroke="#c8c8c8"/><path d="M240.4,588.5 h3" stroke="#0000d8"/><path d="M243.4,588.5 h3" stroke="#b0a000"/><path d="M246.4,588.5 h3" stroke="#0000d8"/><path d="M252.6,588.5 h3" stroke="#c8c8c8"/><path d="M255.6,588.5 h3" stroke="#b0a000"/><path d="M258.6,588.5 h3" stroke="#c8c8c8"/><path d="M264.7,588.5 h3" stroke="#0000d8"/><path d="M267.7,588.5 h3" stroke="#b0a000"/><path d="M270.7,588.5 h3" stroke="#0000d8"/><path d="M276.9,588.5 h3" stroke="#c8c8c8"/><path d="M279.9,588.5 h3" stroke="#b0a000"/><path d="M282.9,588.5 h3" stroke="#c8c8c8"/><path d="M289.0,588.5 h3" stroke="#0000d8"/><path d="M292.0,588.5 h3" stroke="#b0a000"/><path d="M295.0,588.5 h3" stroke="#0000d8"/><path d="M301.1,588.5 h3" stroke="#c8c8c8"/><path d="M304.1,588.5 h3" stroke="#b0a000"/><path d="M307.1,588.5 h3" stroke="#c8c8c8"/><path d="M313.3,588.5 h3" stroke="#0000d8"/><path d="M316.3,588.5 h3" stroke="#b0a000"/><path d="M319.3,588.5 h3" stroke="#0000d8"/><path d="M325.4,588.5 h3" stroke="#c8c8c8"/><path d="M328.4,588.5 h3" stroke="#b0a000"/><path d="M331.4,588.5 h3" stroke="#c8c8c8"/><path d="M337.6,588.5 h3" stroke="#0000d8"/><path d="M340.6,588.5 h3" stroke="#b0a000"/><path d="M343.6,588.5 h3" stroke="#0000d8"/><path d="M349.7,588.5 h3" stroke="#c8c8c8"/><path d="M352.7,588.5 h3" stroke="#b0a000"/><path d="M355.7,588.5 h3" stroke="#c8c8c8"/><path d="M361.9,588.5 h3" stroke="#0000d8"/><path d="M364.9,588.5 h3" stroke="#b0a000"/><path d="M367.9,588.5 h3" stroke="#0000d8"/><path d="M374.0,588.5 h3" stroke="#c8c8c8"/><path d="M377.0,588.5 h3" stroke="#b0a000"/><path d="M380.0,588.5 h3" stroke="#c8c8c8"/><path d="M386.2,588.5 h3" stroke="#0000d8"/><path d="M389.2,588.5 h3" stroke="#b0a000"/><path d="M392.2,588.5 h3" stroke="#0000d8"/><path d="M398.3,588.5 h3" stroke="#c8c8c8"/><path d="M401.3,588.5 h3" stroke="#b0a000"/><path d="M404.3,588.5 h3" stroke="#c8c8c8"/><path d="M410.5,588.5 h3" stroke="#0000d8"/><path d="M413.5,588.5 h3" stroke="#b0a000"/><path d="M416.5,588.5 h3" stroke="#0000d8"/><path d="M422.6,588.5 h3" stroke="#c8c8c8"/><path d="M425.6,588.5 h3" stroke="#b0a000"/><path d="M428.6,588.5 h3" stroke="#c8c8c8"/><path d="M434.8,588.5 h3" stroke="#0000d8"/><path d="M437.8,588.5 h3" stroke="#b0a000"/><path d="M440.8,588.5 h3" stroke="#0000d8"/><path d="M446.9,588.5 h3" stroke="#c8c8c8"/><path d="M449.9,588.5 h3" stroke="#b0a000"/><path d="M452.9,588.5 h3" stroke="#c8c8c8"/><path d="M459.1,588.5 h3" stroke="#0000d8"/><path d="M462.1,588.5 h3" stroke="#b0a000"/><path d="M465.1,588.5 h3" stroke="#0000d8"/><path d="M471.2,588.5 h3" stroke="#c8c8c8"/><path d="M474.2,588.5 h3" stroke="#b0a000"/><path d="M477.2,588.5 h3" stroke="#c8c8c8"/><path d="M483.4,588.5 h3" stroke="#0000d8"/><path d="M486.4,588.5 h3" stroke="#b0a000"/><path d="M489.4,588.5 h3" stroke="#0000d8"/><path d="M495.5,588.5 h3" stroke="#c8c8c8"/><path d="M498.5,588.5 h3" stroke="#b0a000"/><path d="M501.5,588.5 h3" stroke="#c8c8c8"/><path d="M507.7,588.5 h3" stroke="#0000d8"/><path d="M510.7,588.5 h3" stroke="#b0a000"/><path d="M513.7,588.5 h3" stroke="#0000d8"/><path d="M519.8,588.5 h3" stroke="#c8c8c8"/><path d="M522.8,588.5 h3" stroke="#b0a000"/><path d="M525.8,588.5 h3" stroke="#c8c8c8"/><path d="M532.0,588.5 h3" stroke="#0000d8"/><path d="M535.0,588.5 h3" stroke="#b0a000"/><path d="M538.0,588.5 h3" stroke="#0000d8"/><path d="M544.1,588.5 h3" stroke="#c8c8c8"/><path d="M547.1,588.5 h3" stroke="#b0a000"/><path d="M550.1,588.5 h3" stroke="#c8c8c8"/><path d="M556.3,588.5 h3" stroke="#0000d8"/><path d="M559.3,588.5 h3" stroke="#b0a000"/><path d="M562.3,588.5 h3" stroke="#0000d8"/><path d="M568.4,588.5 h3" stroke="#c8c8c8"/><path d="M571.4,588.5 h3" stroke="#b0a000"/><path d="M574.4,588.5 h3" stroke="#c8c8c8"/><path d="M580.6,588.5 h3" stroke="#0000d8"/><path d="M583.6,588.5 h3" stroke="#b0a000"/><path d="M586.6,588.5 h3" stroke="#0000d8"/><path d="M592.7,588.5 h3" stroke="#c8c8c8"/><path d="M595.7,588.5 h3" stroke="#b0a000"/><path d="M598.7,588.5 h3" stroke="#c8c8c8"/><path d="M604.9,588.5 h3" stroke="#0000d8"/><path d="M607.9,588.5 h3" stroke="#b0a000"/><path d="M610.9,588.5 h3" stroke="#0000d8"/><path d="M617.0,588.5 h3" stroke="#c8c8c8"/><path d="M620.0,588.5 h3" stroke="#b0a000"/><path d="M623.0,588.5 h3" stroke="#c8c8c8"/><path d="M629.2,588.5 h3" stroke="#0000d8"/><path d="M632.2,588.5 h3" stroke="#b0a000"/><path d="M635.2,588.5 h3" stroke="#0000d8"/><path d="M641.3,588.5 h3" stroke="#c8c8c8"/><path d="M644.3,588.5 h3" stroke="#b0a000"/><path d="M647.3,588.5 h3" stroke="#c8c8c8"/><path d="M653.5,588.5 h3" stroke="#0000d8"/><path d="M656.5,588.5 h3" stroke="#b0a000"/><path d="M659.5,588.5 h3" stroke="#0000d8"/><path d="M665.6,588.5 h3" stroke="#c8c8c8"/><path d="M668.6,588.5 h3" stroke="#b0a000"/><path d="M671.6,588.5 h3" stroke="#c8c8c8"/><path d="M677.8,588.5 h3" stroke="#0000d8"/><path d="M680.8,588.5 h3" stroke="#b0a000"/><path d="M683.8,588.5 h3" stroke="#0000d8"/><path d="M689.9,588.5 h3" stroke="#c8c8c8"/><path d="M692.9,588.5 h3" stroke="#b0a000"/><path d="M695.9,588.5 h3" stroke="#c8c8c8"/><path d="M702.1,588.5 h3" stroke="#0000d8"/><path d="M705.1,588.5 h3" stroke="#b0a000"/><path d="M708.1,588.5 h3" stroke="#0000d8"/><path d="M714.2,588.5 h3" stroke="#c8c8c8"/><path d="M717.2,588.5 h3" stroke="#b0a000"/><path d="M720.2,588.5 h3" stroke="#c8c8c8"/><path d="M726.4,588.5 h3" stroke="#0000d8"/><path d="M729.4,588.5 h3" stroke="#b0a000"/><path d="M732.4,588.5 h3" stroke="#0000d8"/><path d="M266.5,96 V638" stroke="#ff0000" stroke-width="1.2"/><path d="M303.5,96 V638" stroke="#0000ff" stroke-width="1.2"/><path d="M95.0,188.6 L96.5,188.6 L98.0,189.3 L99.5,188.6 L101.0,187.9 L102.5,188.6 L104.0,188.6 L105.5,187.9 L107.0,188.6 L108.5,187.9 L110.0,188.6 L111.5,187.9 L113.0,187.9 L114.5,188.6 L116.0,188.6 L117.5,189.3 L119.0,189.3 L120.5,188.6 L122.5,188.6 L123.8,196.0 L124.2,233.0 L125.0,272.0 L126.0,286.6 L127.5,286.6 L129.0,286.6 L130.5,286.6 L132.0,286.6 L133.5,285.9 L135.0,286.6 L136.5,286.6 L138.0,287.3 L139.5,285.9 L141.0,286.6 L142.5,286.6 L144.0,287.3 L145.5,286.6 L147.0,286.6 L148.5,286.6 L150.0,286.6 L151.5,285.9 L153.0,285.9 L154.5,287.3 L156.0,286.6 L157.5,286.6 L159.0,286.6 L160.5,286.6 L162.0,286.6 L163.5,286.6 L165.0,286.6 L166.5,286.6 L168.0,285.2 L169.5,286.6 L171.0,286.6 L172.5,286.6 L174.0,286.6 L175.5,286.6 L177.0,286.6 L178.5,285.9 L180.0,286.6 L181.5,286.6 L183.0,287.3 L184.5,286.6 L186.0,285.9 L187.5,286.6 L189.0,286.6 L190.5,286.6 L192.0,286.6 L193.5,286.6 L195.0,286.6 L196.5,286.6 L198.0,286.6 L199.5,286.6 L201.0,286.6 L202.5,286.6 L204.0,286.6 L205.5,286.6 L207.0,285.9 L208.5,286.6 L210.0,286.6 L211.5,286.6 L213.0,286.6 L214.5,286.6 L216.0,286.6 L217.5,286.6 L219.0,285.9 L220.5,286.6 L222.0,287.3 L223.5,285.9 L225.0,285.9 L226.5,286.6 L228.0,287.3 L229.5,285.2 L231.0,286.6 L232.5,286.6 L234.0,285.9 L235.5,286.6 L237.0,286.6 L238.5,286.6 L240.0,286.6 L241.5,286.6 L243.0,286.6 L244.5,286.6 L246.0,286.6 L247.5,286.6 L249.0,286.6 L250.5,287.3 L252.0,287.3 L253.5,287.3 L255.0,287.3 L256.5,286.6 L258.0,286.6 L259.5,285.2 L261.0,285.9 L263.4,286.6 L264.0,250.0 L265.0,215.0 L266.0,188.6 L267.5,188.6 L269.0,188.6 L270.5,188.6 L272.0,188.6 L273.5,188.6 L275.0,188.6 L276.5,188.6 L278.0,188.6 L279.5,187.9 L281.0,188.6 L282.5,188.6 L284.0,188.6 L285.5,188.6 L287.0,188.6 L288.5,188.6 L290.0,187.9 L291.5,188.6 L293.0,187.9 L294.5,187.9 L296.0,189.3 L297.5,189.3 L299.0,188.6 L300.5,187.9 L302.0,187.9 L303.5,189.3 L305.0,187.9 L306.5,188.6 L308.0,187.9 L309.5,188.6 L311.0,188.6 L312.5,189.3 L314.0,187.2 L315.5,188.6 L317.0,188.6 L318.5,189.3 L320.0,188.6 L321.5,188.6 L323.0,188.6 L324.5,188.6 L326.0,187.9 L327.5,187.9 L329.0,188.6 L330.5,187.2 L332.0,188.6 L333.5,189.3 L335.0,187.9 L336.5,188.6 L338.0,188.6 L339.5,189.3 L341.0,188.6 L342.5,187.9 L344.0,188.6 L345.5,188.6 L347.0,188.6 L348.5,188.6 L350.0,187.2 L351.5,188.6 L353.0,189.3 L354.5,188.6 L356.0,188.6 L357.5,188.6 L359.0,188.6 L360.5,189.3 L362.0,188.6 L363.5,188.6 L365.0,188.6 L366.5,188.6 L368.0,188.6 L369.5,188.6 L371.0,189.3 L372.5,188.6 L374.0,188.6 L375.5,187.9 L377.0,187.9 L378.5,188.6 L380.0,187.2 L381.5,188.6 L383.0,188.6 L384.5,188.6 L386.0,188.6 L387.5,188.6 L388.6,188.6 L389.8,196.0 L390.3,233.0 L391.2,272.0 L392.2,286.6 L393.7,286.6 L395.2,286.6 L396.7,287.3 L398.2,287.3 L399.7,287.3 L401.2,287.3 L402.7,286.6 L404.2,286.6 L405.7,286.6 L407.2,286.6 L408.7,286.6 L410.2,286.6 L411.7,285.9 L413.2,286.6 L414.7,286.6 L416.2,286.6 L417.7,286.6 L419.2,286.6 L420.7,287.3 L422.2,286.6 L423.7,286.6 L425.2,286.6 L426.7,286.6 L428.2,286.6 L429.7,286.6 L431.2,286.6 L432.7,286.6 L434.2,287.3 L435.7,287.3 L437.2,287.3 L438.7,286.6 L440.2,286.6 L441.7,287.3 L443.2,286.6 L444.7,286.6 L446.2,286.6 L447.7,286.6 L449.2,286.6 L450.7,287.3 L452.2,285.9 L453.7,286.6 L455.2,286.6 L456.7,286.6 L458.2,286.6 L459.7,286.6 L461.2,286.6 L462.7,286.6 L464.2,287.3 L465.7,285.2 L467.2,286.6 L468.7,285.2 L470.2,286.6 L471.7,285.2 L473.2,286.6 L474.7,287.3 L476.2,286.6 L477.7,286.6 L479.2,286.6 L480.7,286.6 L482.2,286.6 L483.7,286.6 L485.2,286.6 L486.7,286.6 L488.2,286.6 L489.7,286.6 L491.2,285.9 L492.7,286.6 L494.2,287.3 L495.7,285.9 L497.2,286.6 L498.7,287.3 L500.2,286.6 L501.7,286.6 L503.2,286.6 L504.7,286.6 L506.2,286.6 L507.7,286.6 L509.2,286.6 L510.7,285.9 L512.2,286.6 L513.7,285.2 L515.2,286.6 L516.7,286.6 L518.2,286.6 L519.7,286.6 L521.2,286.6 L522.7,286.6 L524.2,286.6 L525.7,286.6 L527.2,286.6 L529.3,286.6 L530.0,250.0 L531.0,215.0 L532.0,188.6 L533.5,188.6 L535.0,188.6 L536.5,188.6 L538.0,188.6 L539.5,188.6 L541.0,188.6 L542.5,188.6 L544.0,188.6 L545.5,188.6 L547.0,187.2 L548.5,188.6 L550.0,188.6 L551.5,188.6 L553.0,189.3 L554.5,189.3 L556.0,188.6 L557.5,187.9 L559.0,187.2 L560.5,187.9 L562.0,188.6 L563.5,188.6 L565.0,188.6 L566.5,189.3 L568.0,188.6 L569.5,188.6 L571.0,189.3 L572.5,188.6 L574.0,188.6 L575.5,189.3 L577.0,188.6 L578.5,188.6 L580.0,188.6 L581.5,188.6 L583.0,188.6 L584.5,189.3 L586.0,188.6 L587.5,188.6 L589.0,188.6 L590.5,189.3 L592.0,188.6 L593.5,188.6 L595.0,187.9 L596.5,188.6 L598.0,188.6 L599.5,187.9 L601.0,188.6 L602.5,188.6 L604.0,188.6 L605.5,187.9 L607.0,188.6 L608.5,188.6 L610.0,188.6 L611.5,187.9 L613.0,187.2 L614.5,187.9 L616.0,188.6 L617.5,188.6 L619.0,189.3 L620.5,188.6 L622.0,188.6 L623.5,188.6 L625.0,187.2 L626.5,189.3 L628.0,188.6 L629.5,188.6 L631.0,188.6 L632.5,187.9 L634.0,187.9 L635.5,188.6 L637.0,188.6 L638.5,187.9 L640.0,188.6 L641.5,188.6 L643.0,188.6 L644.5,187.9 L646.0,188.6 L647.5,187.9 L649.0,188.6 L650.5,188.6 L652.0,188.6 L653.5,188.6 L654.6,188.6 L655.8,196.0 L656.5,233.0 L657.5,272.0 L658.5,286.6 L660.0,286.6 L661.5,285.2 L663.0,287.3 L664.5,286.6 L666.0,287.3 L667.5,285.9 L669.0,287.3 L670.5,285.9 L672.0,287.3 L673.5,286.6 L675.0,286.6 L676.5,286.6 L678.0,286.6 L679.5,286.6 L681.0,287.3 L682.5,286.6 L684.0,285.9 L685.5,285.2 L687.0,285.9 L688.5,286.6 L690.0,286.6 L691.5,287.3 L693.0,286.6 L694.5,286.6 L696.0,285.9 L697.5,286.6 L699.0,286.6 L700.5,286.6 L702.0,286.6 L703.5,286.6 L705.0,286.6 L706.5,286.6 L708.0,286.6 L709.5,286.6 L711.0,286.6 L712.5,286.6 L714.0,286.6 L715.5,286.6 L717.0,286.6 L718.5,285.9 L720.0,287.3 L721.5,285.9 L723.0,286.6 L724.5,285.2 L726.0,287.3 L727.5,285.9 L729.0,286.6 L730.5,286.6 L732.0,286.6 L733.5,286.6 L736.0,286.6" stroke="#00ff00" stroke-width="1.8" fill="none" stroke-linejoin="round"/><path d="M529.3,286.6 L531,252 L531.8,215 L533,188.6" stroke="#00ff00" stroke-width="1.2" fill="none"/><path d="M124.6,234 V272" stroke="#c000c0" stroke-width="1" stroke-dasharray="3 3"/><path d="M266.2,190 V200" stroke="#ffff00" stroke-width="1.2"/><path d="M95.0,551.0 L96.5,550.0 L98.0,551.0 L99.5,551.0 L101.0,551.5 L102.5,551.0 L104.0,550.0 L105.5,551.0 L107.0,551.0 L108.5,551.0 L110.0,550.0 L111.5,551.0 L113.0,551.0 L114.5,551.0 L116.0,550.5 L117.5,551.0 L119.0,551.0 L120.5,551.0 L122.0,551.5 L123.5,551.0 L126.0,551.0 L127.0,540.0 L128.0,551.0 L129.5,550.5 L131.0,550.0 L132.5,550.5 L134.0,551.0 L135.5,550.5 L137.0,550.5 L138.5,551.0 L140.0,551.5 L141.5,551.0 L143.0,551.0 L144.5,551.0 L146.0,551.0 L147.5,551.0 L149.0,551.0 L150.5,551.0 L152.0,551.0 L153.5,551.0 L155.0,551.5 L156.5,551.0 L158.0,551.0 L159.5,550.5 L161.0,551.0 L162.5,551.0 L164.0,551.0 L165.5,551.0 L167.0,551.0 L168.5,551.5 L170.0,551.0 L171.5,551.0 L173.0,551.0 L174.5,551.0 L176.0,551.0 L177.5,551.0 L179.0,551.0 L180.5,551.0 L182.0,551.0 L183.5,551.5 L185.0,550.5 L186.5,551.5 L188.0,551.0 L189.5,550.5 L191.0,551.0 L192.5,551.0 L194.0,551.0 L195.5,551.0 L197.0,551.0 L198.5,551.0 L200.0,550.5 L201.5,551.0 L203.0,551.0 L204.5,551.0 L206.0,551.0 L207.5,551.0 L209.0,550.5 L210.5,551.0 L212.0,550.0 L213.5,550.5 L215.0,550.0 L216.5,551.0 L218.0,551.5 L219.5,551.0 L221.0,551.0 L222.5,551.0 L224.0,551.0 L225.5,551.0 L227.0,551.0 L228.5,551.0 L230.0,551.0 L231.5,551.0 L233.0,550.5 L234.5,551.5 L236.0,550.0 L237.5,551.0 L239.0,551.0 L240.5,551.0 L242.0,550.5 L243.5,550.5 L245.0,550.0 L246.5,551.0 L248.0,551.0 L249.5,551.0 L251.0,551.0 L252.5,551.0 L254.0,551.0 L255.5,551.0 L257.0,550.5 L258.5,551.0 L260.0,551.5 L261.5,551.0 L263.0,551.0 L264.5,550.5 L266.3,551.0 L267.3,500.0 L268.8,459.2 L270.3,459.2 L271.8,459.2 L273.3,459.2 L274.8,459.2 L276.3,458.2 L277.8,459.7 L279.3,459.2 L280.8,459.7 L282.3,459.2 L283.8,459.7 L285.3,459.2 L286.8,459.2 L288.3,459.7 L289.8,459.2 L291.3,459.2 L292.8,459.2 L294.3,459.2 L295.8,459.7 L297.3,459.2 L298.8,459.2 L300.3,458.7 L301.6,459.2 L303.0,500.0 L304.5,551.0 L306.0,550.5 L307.5,551.0 L309.0,551.0 L310.5,551.0 L312.0,551.5 L313.5,551.0 L315.0,551.0 L316.5,551.0 L318.0,550.5 L319.5,551.0 L321.0,551.0 L322.5,551.5 L324.0,551.0 L325.5,551.0 L327.0,551.0 L328.5,551.0 L330.0,551.0 L331.5,551.0 L333.0,551.0 L334.5,551.0 L336.0,551.0 L337.5,551.0 L339.0,551.0 L340.5,550.5 L342.0,550.5 L343.5,551.0 L345.0,551.0 L346.5,551.0 L348.0,550.0 L349.5,550.0 L351.0,551.0 L352.5,551.5 L354.0,551.0 L355.5,551.0 L357.0,551.0 L358.5,551.0 L360.0,551.0 L361.5,551.0 L363.0,551.0 L364.5,551.0 L366.0,551.0 L367.5,550.5 L369.0,551.0 L370.5,551.0 L372.0,551.0 L373.5,551.0 L375.0,551.0 L376.5,550.5 L378.0,551.0 L379.5,551.5 L381.0,551.0 L382.5,551.0 L384.0,551.0 L385.5,551.0 L387.0,551.0 L388.5,550.0 L390.0,551.0 L392.5,551.0 L393.5,540.0 L394.5,551.0 L396.0,551.0 L397.5,551.0 L399.0,551.0 L400.5,551.5 L402.0,551.5 L403.5,551.5 L405.0,551.0 L406.5,551.0 L408.0,551.5 L409.5,551.0 L411.0,551.0 L412.5,551.0 L414.0,551.5 L415.5,551.5 L417.0,550.5 L418.5,551.0 L420.0,550.5 L421.5,551.5 L423.0,550.0 L424.5,551.0 L426.0,551.0 L427.5,551.0 L429.0,551.0 L430.5,551.0 L432.0,551.0 L433.5,551.0 L435.0,551.0 L436.5,550.5 L438.0,551.0 L439.5,551.0 L441.0,551.5 L442.5,551.0 L444.0,551.0 L445.5,551.0 L447.0,551.5 L448.5,551.0 L450.0,550.0 L451.5,551.0 L453.0,551.0 L454.5,551.0 L456.0,551.0 L457.5,551.0 L459.0,550.5 L460.5,550.5 L462.0,551.0 L463.5,551.0 L465.0,551.0 L466.5,551.0 L468.0,550.5 L469.5,551.0 L471.0,551.0 L472.5,551.0 L474.0,551.0 L475.5,551.0 L477.0,550.0 L478.5,550.5 L480.0,551.5 L481.5,551.0 L483.0,551.0 L484.5,551.0 L486.0,551.0 L487.5,551.0 L489.0,551.0 L490.5,551.0 L492.0,551.0 L493.5,550.5 L495.0,551.0 L496.5,551.5 L498.0,551.0 L499.5,551.0 L501.0,551.0 L502.5,551.5 L504.0,550.0 L505.5,551.0 L507.0,551.0 L508.5,550.5 L510.0,550.5 L511.5,551.0 L513.0,551.0 L514.5,551.0 L516.0,551.5 L517.5,551.0 L519.0,550.5 L520.5,551.0 L522.0,551.0 L523.5,551.0 L525.0,551.0 L526.5,551.0 L528.0,551.0 L529.5,551.5 L531.0,550.0 L532.8,551.0 L534.0,500.0 L535.2,459.2 L536.7,459.2 L538.2,459.2 L539.7,459.2 L541.2,458.7 L542.7,459.2 L544.2,459.2 L545.7,459.2 L547.2,458.2 L548.7,459.2 L550.2,459.2 L551.7,459.7 L553.2,458.7 L554.7,459.2 L556.2,459.2 L557.7,459.2 L559.2,459.7 L560.7,459.2 L562.2,459.2 L563.7,459.2 L565.2,459.7 L567.6,459.2 L569.0,500.0 L571.0,551.0 L572.5,551.0 L574.0,551.0 L575.5,551.0 L577.0,551.5 L578.5,551.5 L580.0,551.0 L581.5,551.0 L583.0,551.0 L584.5,551.0 L586.0,551.5 L587.5,551.5 L589.0,551.0 L590.5,551.0 L592.0,551.0 L593.5,551.5 L595.0,551.0 L596.5,551.5 L598.0,551.0 L599.5,551.5 L601.0,550.5 L602.5,550.5 L604.0,551.0 L605.5,551.0 L607.0,551.0 L608.5,551.0 L610.0,551.0 L611.5,551.0 L613.0,551.0 L614.5,551.5 L616.0,551.0 L617.5,551.0 L619.0,550.5 L620.5,551.0 L622.0,551.0 L623.5,551.0 L625.0,551.0 L626.5,551.5 L628.0,550.5 L629.5,551.0 L631.0,551.0 L632.5,551.0 L634.0,551.5 L635.5,551.0 L637.0,551.5 L638.5,551.0 L640.0,551.0 L641.5,551.0 L643.0,551.0 L644.5,550.5 L646.0,551.0 L647.5,551.0 L649.0,551.0 L650.5,551.5 L652.0,551.0 L653.5,551.0 L655.0,550.5 L656.5,551.0 L658.4,551.0 L659.4,539.0 L660.4,551.0 L661.9,551.0 L663.4,551.0 L664.9,550.5 L666.4,550.5 L667.9,550.5 L669.4,551.0 L670.9,550.0 L672.4,551.0 L673.9,551.0 L675.4,551.0 L676.9,551.0 L678.4,551.0 L679.9,551.0 L681.4,550.0 L682.9,551.0 L684.4,551.0 L685.9,551.0 L687.4,550.5 L688.9,551.0 L690.4,551.0 L691.9,551.0 L693.4,551.0 L694.9,550.5 L696.4,551.5 L697.9,551.0 L699.4,551.0 L700.9,551.0 L702.4,551.0 L703.9,550.0 L705.4,551.0 L706.9,551.0 L708.4,551.0 L709.9,551.5 L711.4,551.0 L712.9,551.0 L714.4,551.0 L715.9,551.0 L717.4,551.0 L718.9,551.0 L720.4,551.0 L721.9,551.0 L723.4,551.0 L724.9,550.5 L726.4,551.5 L727.9,551.0 L729.4,550.0 L730.9,550.5 L732.4,550.5 L733.9,551.0 L736.0,551.0" stroke="#ffff00" stroke-width="1.8" fill="none" stroke-linejoin="round"/><path d="M531.8,551 L533,500 L534,460.2 H568.6 L570,500 L571.8,551" stroke="#ffff00" stroke-width="1.3" fill="none"/><path d="M303.6,520 L304.2,548" stroke="#fff" stroke-width="1.3"/><path d="M266.3,549 L266.8,538" stroke="#00e000" stroke-width="1.3"/><rect x="95" y="235" width="9" height="9" fill="#00ff00"/><polygon points="124.5,639.3 113.5,650 135.5,650" fill="#ff0000"/><rect x="99" y="109" width="13.9" height="12" fill="#000"/><text x="99.3" y="119" fill="#00c800" textLength="13.0" lengthAdjust="spacingAndGlyphs">6V</text><rect x="99" y="177" width="13.9" height="12" fill="#000"/><text x="99.3" y="187" fill="#00c800" textLength="13.0" lengthAdjust="spacingAndGlyphs">4V</text><rect x="99" y="245" width="13.9" height="12" fill="#000"/><text x="99.3" y="255" fill="#00c800" textLength="13.0" lengthAdjust="spacingAndGlyphs">2V</text><rect x="99" y="312" width="13.9" height="12" fill="#000"/><text x="99.3" y="322" fill="#00c800" textLength="13.0" lengthAdjust="spacingAndGlyphs">0V</text><rect x="99" y="380" width="16.7" height="12" fill="#000"/><text x="99.3" y="390" fill="#00c800" textLength="15.799999999999999" lengthAdjust="spacingAndGlyphs">-2V</text><rect x="99" y="448" width="16.7" height="12" fill="#000"/><text x="99.3" y="458" fill="#00c800" textLength="15.799999999999999" lengthAdjust="spacingAndGlyphs">-4V</text><rect x="99" y="516" width="16.7" height="12" fill="#000"/><text x="99.3" y="526" fill="#00c800" textLength="15.799999999999999" lengthAdjust="spacingAndGlyphs">-6V</text><rect x="99" y="583" width="16.7" height="12" fill="#000"/><text x="99.3" y="593" fill="#00c800" textLength="15.799999999999999" lengthAdjust="spacingAndGlyphs">-8V</text><rect x="712.0" y="109" width="20.3" height="11" fill="#000"/><text x="713.2" y="119" fill="#d0d000" textLength="18.5" lengthAdjust="spacingAndGlyphs">14V</text><rect x="732.3" y="114" width="3" height="1" fill="#d0d000"/><rect x="735.3" y="113" width="1" height="3" fill="#000"/><rect x="712.0" y="177" width="20.3" height="11" fill="#000"/><text x="713.2" y="187" fill="#d0d000" textLength="18.5" lengthAdjust="spacingAndGlyphs">12V</text><rect x="732.3" y="182" width="3" height="1" fill="#d0d000"/><rect x="735.3" y="181" width="1" height="3" fill="#000"/><rect x="712.0" y="245" width="20.3" height="11" fill="#000"/><text x="713.2" y="255" fill="#d0d000" textLength="18.5" lengthAdjust="spacingAndGlyphs">10V</text><rect x="732.3" y="250" width="3" height="1" fill="#d0d000"/><rect x="735.3" y="249" width="1" height="3" fill="#000"/><rect x="717.5" y="312" width="14.799999999999999" height="11" fill="#000"/><text x="718.7" y="322" fill="#d0d000" textLength="13.0" lengthAdjust="spacingAndGlyphs">8V</text><rect x="732.3" y="317" width="3" height="1" fill="#d0d000"/><rect x="735.3" y="316" width="1" height="3" fill="#000"/><rect x="717.5" y="380" width="14.799999999999999" height="11" fill="#000"/><text x="718.7" y="390" fill="#d0d000" textLength="13.0" lengthAdjust="spacingAndGlyphs">6V</text><rect x="732.3" y="385" width="3" height="1" fill="#d0d000"/><rect x="735.3" y="384" width="1" height="3" fill="#000"/><rect x="717.5" y="448" width="14.799999999999999" height="11" fill="#000"/><text x="718.7" y="458" fill="#d0d000" textLength="13.0" lengthAdjust="spacingAndGlyphs">4V</text><rect x="732.3" y="453" width="3" height="1" fill="#d0d000"/><rect x="735.3" y="452" width="1" height="3" fill="#000"/><rect x="717.5" y="516" width="14.799999999999999" height="11" fill="#000"/><text x="718.7" y="526" fill="#d0d000" textLength="13.0" lengthAdjust="spacingAndGlyphs">2V</text><rect x="732.3" y="521" width="3" height="1" fill="#d0d000"/><rect x="735.3" y="520" width="1" height="3" fill="#000"/><rect x="691.2" y="583" width="41.1" height="11" fill="#000"/><text x="692.4000000000001" y="593" fill="#d0d000" textLength="39.3" lengthAdjust="spacingAndGlyphs">-3,37mV</text><rect x="732.3" y="588" width="3" height="1" fill="#d0d000"/><rect x="735.3" y="587" width="1" height="3" fill="#000"/></svg>
<div class="k" style="left:95px;top:650px;width:641px;height:17px;"></div>
<div class="b" style="left:95px;top:650px;width:16px;height:17px;"></div>
<div class="b" style="left:720px;top:650px;width:16px;height:17px;"></div>
<svg style="left:100px;top:655.0px" width="4" height="7"><polygon points="4,0 0,3.5 4,7" fill="#000"/></svg>
<svg style="left:727px;top:655.0px" width="4" height="7"><polygon points="0,0 4,3.5 0,7" fill="#000"/></svg>
<div class="b" style="left:111px;top:650px;width:16px;height:17px;"></div>
<div style="left:736px;top:96px;width:1px;height:572px;background:#eeece8"></div>
<div style="left:95px;top:667px;width:642px;height:1px;background:#fff"></div>
<div class="g" style="left:106px;top:673px;width:128px;height:144px;"></div>
<div style="left:113.4px;top:672px;width:51.6px;height:3px;background:#d4d0c8"></div>
<span class="t" style="left:114.60px;top:669px;line-height:13px;letter-spacing:0.07px;transform:scaleY(1.125);transform-origin:0 10px;">Save/load</span>
<i style="left:110.0px;top:689.5px;width:11px;height:11px;border:1.3px solid #202020;border-radius:50%"></i>
<div class="e" style="left:122px;top:685px;width:93px;height:20px;"></div>
<div class="b" style="left:215px;top:685px;width:14px;height:20px;"></div>
<div style="left:219px;top:690px;width:6px;height:1px;background:#000"></div>
<div style="left:219px;top:693px;width:6px;height:1px;background:#000"></div>
<div style="left:219px;top:696px;width:6px;height:1px;background:#000"></div>
<div style="left:219px;top:699px;width:6px;height:1px;background:#000"></div>
<div class="b" style="left:139px;top:707px;width:45px;height:22px;"></div>
<span class="t" style="left:146.50px;top:714px;line-height:13px;color:#fff;letter-spacing:-0.28px;transform:scaleY(1.125);transform-origin:0 10px;">Unload</span>
<span class="t" style="left:145.50px;top:713px;line-height:13px;color:#808080;letter-spacing:-0.28px;transform:scaleY(1.125);transform-origin:0 10px;">Unload</span>
<div class="b" style="left:184px;top:707px;width:45px;height:22px;"></div>
<span class="t" style="left:195.50px;top:713px;line-height:13px;letter-spacing:-0.33px;transform:scaleY(1.125);transform-origin:0 10px;">Load</span>
<i style="left:142.0px;top:736.2px;width:11px;height:11px;border:1.3px solid #202020;border-radius:50%"></i>
<div class="b" style="left:156px;top:730px;width:73px;height:22px;"></div>
<span class="t" style="left:161.00px;top:736px;line-height:13px;color:#fff;letter-spacing:-0.27px;transform:scaleY(1.125);transform-origin:0 10px;">Apply settings</span>
<span class="t" style="left:160.00px;top:735px;line-height:13px;color:#808080;letter-spacing:-0.27px;transform:scaleY(1.125);transform-origin:0 10px;">Apply settings</span>
<div class="e" style="left:114px;top:769px;width:13px;height:13px;background:#d4d0c8"></div>
<span class="t" style="left:133.30px;top:770px;line-height:13px;color:#fff;letter-spacing:-0.10px;transform:scaleY(1.125);transform-origin:0 10px;">Autosave</span>
<span class="t" style="left:132.30px;top:769px;line-height:13px;color:#808080;letter-spacing:-0.10px;transform:scaleY(1.125);transform-origin:0 10px;">Autosave</span>
<div class="b" style="left:184px;top:764px;width:45px;height:22px;"></div>
<span class="t" style="left:194.80px;top:770px;line-height:13px;letter-spacing:-0.41px;transform:scaleY(1.125);transform-origin:0 10px;">Save</span>
<i style="left:110.0px;top:792.0px;width:11px;height:11px;border:1.3px solid #202020;border-radius:50%"></i>
<div class="e" style="left:122px;top:787px;width:93px;height:20px;"></div>
<div class="b" style="left:215px;top:787px;width:14px;height:20px;"></div>
<div style="left:219px;top:792px;width:6px;height:1px;background:#000"></div>
<div style="left:219px;top:795px;width:6px;height:1px;background:#000"></div>
<div style="left:219px;top:798px;width:6px;height:1px;background:#000"></div>
<div style="left:219px;top:801px;width:6px;height:1px;background:#000"></div>
<div class="g" style="left:236px;top:673px;width:80px;height:144px;"></div>
<div style="left:242.6px;top:672px;width:29.6px;height:3px;background:#d4d0c8"></div>
<span class="t" style="left:243.80px;top:669px;line-height:13px;letter-spacing:-0.24px;transform:scaleY(1.125);transform-origin:0 10px;">Zoom</span>
<div class="p" style="left:239px;top:683px;width:60px;height:24px;"></div>
<span class="t" style="left:262.00px;top:692px;line-height:13px;letter-spacing:0.04px;transform:scaleY(1.125);transform-origin:0 10px;">1:32</span>
<i class="l" style="left:289px;top:692px;background:#99e600"></i>
<div class="b" style="left:299px;top:683px;width:15px;height:12px;"></div>
<div class="b" style="left:299px;top:695px;width:15px;height:12px;"></div>
<svg style="left:304.0px;top:687.5px" width="5" height="3"><polygon points="0,3 2.5,0 5,3" fill="#000"/></svg>
<svg style="left:304.0px;top:699.5px" width="5" height="3"><polygon points="0,0 2.5,3 5,0" fill="#000"/></svg>
<span class="t" style="left:239.66px;top:710px;line-height:13px;letter-spacing:-0.55px;transform:scaleY(1.125);transform-origin:0 10px;">Dsp:</span>
<span class="t" style="left:270.26px;top:710px;line-height:13px;letter-spacing:-0.55px;transform:scaleY(1.125);transform-origin:0 10px;">16k</span>
<div class="b" style="left:239px;top:730px;width:75px;height:20px;"></div>
<span class="t" style="left:275.00px;top:735px;line-height:13px;letter-spacing:-0.21px;transform:scaleY(1.125);transform-origin:0 10px;">Auto</span>
<i class="l" style="left:303px;top:740px;background:#e64a00"></i>
<div class="b" style="left:239px;top:751px;width:25px;height:21px;"></div>
<div class="p" style="left:264px;top:751px;width:25px;height:21px;"></div>
<div class="b" style="left:289px;top:751px;width:25px;height:21px;"></div>
<svg style="left:243px;top:753px" width="16" height="17"><path d="M7.1,1.2 V11.6 M7.1,10.6 L2.4,15.2 M7.1,10.6 L11.8,15.2" stroke="#000" stroke-width="2" fill="none"/></svg>
<i class="l" style="left:255px;top:761px;background:#e64a00"></i>
<svg style="left:270px;top:754px" width="12" height="17"><path d="M7.7,1.2 V8.4 M6.2,8 V15.4 M2.4,9.9 H6 M7.5,8.6 L10.5,7" stroke="#000" stroke-width="2" fill="none"/></svg>
<i class="l" style="left:281px;top:757px;background:#99e600"></i>
<svg style="left:292px;top:753px" width="16" height="17"><path d="M7.8,15.8 V6 M7.8,7 L3,1.6 M7.8,7 L12.6,1.6" stroke="#000" stroke-width="2" fill="none"/></svg>
<i class="l" style="left:305px;top:761px;background:#e64a00"></i>
<div class="k" style="left:239px;top:781px;width:75px;height:17px;"></div>
<div class="b" style="left:239px;top:781px;width:16px;height:17px;"></div>
<div class="b" style="left:298px;top:781px;width:16px;height:17px;"></div>
<svg style="left:244px;top:786.0px" width="4" height="7"><polygon points="4,0 0,3.5 4,7" fill="#000"/></svg>
<svg style="left:305px;top:786.0px" width="4" height="7"><polygon points="0,0 4,3.5 0,7" fill="#000"/></svg>
<div class="b" style="left:282px;top:781px;width:16px;height:17px;"></div>
<span class="t" style="left:240.80px;top:800px;line-height:13px;letter-spacing:-0.42px;transform:scaleY(1.125);transform-origin:0 10px;">Mem: 32K</span>
<div class="g" style="left:318px;top:673px;width:104px;height:144px;"></div>
<div style="left:325.6px;top:672px;width:48.9px;height:3px;background:#d4d0c8"></div>
<span class="t" style="left:326.80px;top:669px;line-height:13px;letter-spacing:-0.31px;transform:scaleY(1.125);transform-origin:0 10px;">Horizontal</span>
<div style="left:322px;top:686px;width:2.3px;height:11px;background:#000"></div>
<div style="left:326px;top:686px;width:2.3px;height:11px;background:#000"></div>
<div style="left:330px;top:686px;width:2.3px;height:11px;background:#000"></div>
<div style="left:334px;top:686px;width:2.3px;height:11px;background:#000"></div>
<span class="t" style="left:341.70px;top:686px;line-height:13px;letter-spacing:0.10px;transform:scaleY(1.125);transform-origin:0 10px;">16us/d</span>
<svg style="left:322px;top:700px" width="15" height="11"><rect x="11.7" y="0" width="2.3" height="11" fill="#000"/><path d="M2.5,5.5 H9" stroke="#000" stroke-width="1.2"/><polygon points="7.5,2.6 11.4,5.5 7.5,8.4" fill="#000"/></svg>
<span class="t" style="left:341.70px;top:700px;line-height:13px;letter-spacing:-0.25px;transform:scaleY(1.125);transform-origin:0 10px;">35,08us</span>
<svg style="left:322px;top:714px" width="15" height="11"><rect x="0" y="0" width="2.3" height="11" fill="#000"/><rect x="11.7" y="0" width="2.3" height="11" fill="#000"/><path d="M4,5.5 H10" stroke="#000" stroke-width="1.2"/><polygon points="6.2,2.8 2.6,5.5 6.2,8.2" fill="#000"/><polygon points="7.8,2.8 11.4,5.5 7.8,8.2" fill="#000"/></svg>
<span class="t" style="left:341.70px;top:714px;line-height:13px;letter-spacing:-0.26px;transform:scaleY(1.125);transform-origin:0 10px;">9,28us</span>
<svg style="left:322px;top:728px" width="15" height="11"><rect x="0" y="0" width="2.3" height="11" fill="#000"/><rect x="11.7" y="0" width="2.3" height="11" fill="#000"/><path d="M4,5.5 H10" stroke="#000" stroke-width="1.2"/><polygon points="6.2,2.8 2.6,5.5 6.2,8.2" fill="#000"/><polygon points="7.8,2.8 11.4,5.5 7.8,8.2" fill="#000"/></svg>
<span class="t" style="left:341.70px;top:728px;line-height:13px;letter-spacing:-0.14px;transform:scaleY(1.125);transform-origin:0 10px;">107,759kHz</span>
<div class="hs" style="left:320px;top:747px;width:100px;height:1px;"></div>
<div style="left:322px;top:757px;width:2.3px;height:11px;background:#000"></div>
<div style="left:326px;top:757px;width:2.3px;height:11px;background:#000"></div>
<div style="left:330px;top:757px;width:2.3px;height:11px;background:#000"></div>
<div style="left:334px;top:757px;width:2.3px;height:11px;background:#000"></div>
<span class="t" style="left:341.70px;top:757px;line-height:13px;letter-spacing:0.10px;transform:scaleY(1.125);transform-origin:0 10px;">16us/d</span>
<svg style="left:322px;top:772px" width="14" height="8"><rect x="0" y="2.5" width="3" height="3" fill="#000"/><rect x="11" y="2.5" width="3" height="3" fill="#000"/><path d="M3,4 H11" stroke="#000" stroke-width="1"/><path d="M6,2 L4,4 L6,6 M8,2 L10,4 L8,6" stroke="#000" stroke-width="1" fill="none"/></svg>
<span class="t" style="left:341.70px;top:771px;line-height:13px;letter-spacing:0.07px;transform:scaleY(1.125);transform-origin:0 10px;">100MS/s</span>
<div class="k" style="left:321px;top:786px;width:98px;height:17px;"></div>
<div class="b" style="left:321px;top:786px;width:16px;height:17px;"></div>
<div class="b" style="left:403px;top:786px;width:16px;height:17px;"></div>
<svg style="left:326px;top:791.0px" width="4" height="7"><polygon points="4,0 0,3.5 4,7" fill="#000"/></svg>
<svg style="left:410px;top:791.0px" width="4" height="7"><polygon points="0,0 4,3.5 0,7" fill="#000"/></svg>
<div class="b" style="left:368px;top:786px;width:16px;height:17px;"></div>
<div style="left:336px;top:804.5px;width:1.9px;height:8.2px;background:#808080"></div>
<div style="left:358px;top:804.5px;width:1.9px;height:8.2px;background:#808080"></div>
<div style="left:380px;top:804.5px;width:1.9px;height:8.2px;background:#808080"></div>
<div style="left:402px;top:804.5px;width:1.9px;height:8.2px;background:#808080"></div>
<div class="g" style="left:424px;top:673px;width:88px;height:144px;"></div>
<div style="left:432.0px;top:672px;width:63.4px;height:3px;background:#d4d0c8"></div>
<span class="t" style="left:433.20px;top:669px;line-height:13px;letter-spacing:-0.35px;transform:scaleY(1.125);transform-origin:0 10px;">Trigger mode</span>
<div class="b" style="left:427px;top:692px;width:54px;height:21px;"></div>
<span class="t" style="left:438.52px;top:698px;line-height:13px;letter-spacing:-0.55px;transform:scaleY(1.125);transform-origin:0 10px;">Normal</span>
<div class="b" style="left:482px;top:692px;width:28px;height:21px;"></div>
<svg style="left:484px;top:695px" width="24" height="16"><polygon points="2.4,8.5 6.7,3.8 12.2,2.7 15.5,7 11.1,9.8 8.4,13.6" fill="#00f000" stroke="#003000" stroke-width="0.9"/><path d="M15,6.3 L22.3,12.8" stroke="#000" stroke-width="1.1"/></svg>
<div class="b" style="left:427px;top:715px;width:54px;height:22px;"></div>
<i style="left:435px;top:721px;width:11px;height:11px;border-radius:50%;background:#00ff00;border:1px solid #002000"></i>
<span class="t" style="left:451.62px;top:721px;line-height:13px;letter-spacing:-0.55px;transform:scaleY(1.125);transform-origin:0 10px;">TGD</span>
<div class="b" style="left:482px;top:715px;width:28px;height:22px;"></div>
<span class="t" style="left:487.68px;top:721px;line-height:13px;letter-spacing:1.20px;transform:scaleY(1.125);transform-origin:0 10px;">1/2</span>
<div class="b" style="left:427px;top:742px;width:54px;height:22px;"></div>
<span class="t" style="left:442.50px;top:748px;line-height:13px;letter-spacing:-0.21px;transform:scaleY(1.125);transform-origin:0 10px;">Hold</span>
<i class="l" style="left:470px;top:752px;background:#e64a00"></i>
<div class="hs" style="left:427px;top:776px;width:84px;height:1px;"></div>
<div class="b" style="left:427px;top:785px;width:54px;height:22px;"></div>
<span class="t" style="left:433.50px;top:791px;line-height:13px;letter-spacing:-0.53px;transform:scaleY(1.125);transform-origin:0 10px;">Simple</span>
<i class="l" style="left:470px;top:795px;background:#e64a00"></i>
<div class="g" style="left:514px;top:673px;width:292px;height:144px;"></div>
<div style="left:521.8px;top:672px;width:34.2px;height:3px;background:#d4d0c8"></div>
<span class="t" style="left:523.00px;top:669px;line-height:13px;letter-spacing:-0.40px;transform:scaleY(1.125);transform-origin:0 10px;">Trigger</span>
<span class="t" style="left:540.01px;top:686px;line-height:13px;letter-spacing:-0.55px;transform:scaleY(1.125);transform-origin:0 10px;">Primary</span>
<span class="t" style="left:616.00px;top:686px;line-height:13px;letter-spacing:-0.20px;transform:scaleY(1.125);transform-origin:0 10px;">Secondary</span>
<span class="t" style="left:725.50px;top:686px;line-height:13px;letter-spacing:-0.27px;transform:scaleY(1.125);transform-origin:0 10px;">Hold-off</span>
<span class="t" style="left:716.00px;top:752px;line-height:13px;letter-spacing:-0.27px;transform:scaleY(1.125);transform-origin:0 10px;">After trigger</span>
<div class="p" style="left:518px;top:701px;width:40px;height:19px;"></div>
<span class="t" style="left:535.30px;top:707px;line-height:13px;transform:scaleY(1.125);transform-origin:0 10px;">A</span>
<i class="l" style="left:548px;top:707px;background:#99e600"></i>
<div class="b" style="left:558px;top:701px;width:39px;height:19px;"></div>
<svg style="left:566px;top:703px" width="16" height="16"><path d="M1,1.5 H8.5 V14 H15" stroke="#000" stroke-width="2" fill="none"/></svg>
<i class="r" style="left:583px;top:708px;width:7px;height:5px;background:#00f000"></i>
<div class="b" style="left:518px;top:720px;width:40px;height:19px;"></div>
<span class="t" style="left:534.30px;top:725px;line-height:13px;transform:scaleY(1.125);transform-origin:0 10px;">B</span>
<i class="l" style="left:547px;top:729px;background:#e64a00"></i>
<div class="b" style="left:558px;top:720px;width:39px;height:19px;"></div>
<svg style="left:566px;top:722px" width="16" height="16"><path d="M1.5,13.5 H8.5 V1.5 H15.5" stroke="#808080" stroke-width="1" fill="none"/></svg>
<i class="r" style="left:583px;top:727px;width:7px;height:5px;background:#d4d0c8;border-color:#808080"></i>
<div class="b" style="left:518px;top:739px;width:40px;height:20px;"></div>
<span class="t" style="left:534.30px;top:744px;line-height:13px;transform:scaleY(1.125);transform-origin:0 10px;">E</span>
<i class="l" style="left:547px;top:748px;background:#e64a00"></i>
<div class="b" style="left:558px;top:739px;width:39px;height:20px;"></div>
<svg style="left:566px;top:741px" width="16" height="16"><path d="M1.5,1.5 H8.5 V13.5 H15.5" stroke="#808080" stroke-width="1" fill="none"/></svg>
<i class="r" style="left:583px;top:746px;width:7px;height:5px;background:#d4d0c8;border-color:#808080"></i>
<div class="b" style="left:601px;top:701px;width:40px;height:19px;"></div>
<span class="t" style="left:616.80px;top:706px;line-height:13px;transform:scaleY(1.125);transform-origin:0 10px;">A</span>
<i class="l" style="left:630px;top:710px;background:#e64a00"></i>
<div class="b" style="left:641px;top:701px;width:39px;height:19px;"></div>
<svg style="left:649px;top:703px" width="16" height="16"><path d="M1.5,1.5 H8.5 V13.5 H15.5" stroke="#808080" stroke-width="1" fill="none"/></svg>
<i class="r" style="left:666px;top:708px;width:7px;height:5px;background:#d4d0c8;border-color:#808080"></i>
<div class="b" style="left:601px;top:720px;width:40px;height:19px;"></div>
<span class="t" style="left:616.80px;top:725px;line-height:13px;transform:scaleY(1.125);transform-origin:0 10px;">B</span>
<i class="l" style="left:630px;top:729px;background:#e64a00"></i>
<div class="b" style="left:641px;top:720px;width:39px;height:19px;"></div>
<svg style="left:649px;top:722px" width="16" height="16"><path d="M1.5,1.5 H8.5 V13.5 H15.5" stroke="#808080" stroke-width="1" fill="none"/></svg>
<i class="r" style="left:666px;top:727px;width:7px;height:5px;background:#d4d0c8;border-color:#808080"></i>
<div class="b" style="left:601px;top:739px;width:40px;height:20px;"></div>
<span class="t" style="left:616.80px;top:744px;line-height:13px;transform:scaleY(1.125);transform-origin:0 10px;">E</span>
<i class="l" style="left:630px;top:748px;background:#e64a00"></i>
<div class="b" style="left:641px;top:739px;width:39px;height:20px;"></div>
<svg style="left:649px;top:741px" width="16" height="16"><path d="M1.5,1.5 H8.5 V13.5 H15.5" stroke="#808080" stroke-width="1" fill="none"/></svg>
<i class="r" style="left:666px;top:746px;width:7px;height:5px;background:#d4d0c8;border-color:#808080"></i>
<span class="t" style="left:518.89px;top:768px;line-height:13px;letter-spacing:-0.55px;transform:scaleY(1.125);transform-origin:0 10px;">PFL</span>
<div class="e" style="left:540px;top:764px;width:47px;height:20px;"></div>
<span class="t" style="left:572.31px;top:768px;line-height:13px;letter-spacing:-0.55px;transform:scaleY(1.125);transform-origin:0 10px;">0s</span>
<div class="b" style="left:587px;top:764px;width:11px;height:10px;"></div>
<div class="b" style="left:587px;top:774px;width:11px;height:10px;"></div>
<svg style="left:590.0px;top:767.5px" width="5" height="3"><polygon points="0,3 2.5,0 5,3" fill="#000"/></svg>
<svg style="left:590.0px;top:777.5px" width="5" height="3"><polygon points="0,0 2.5,3 5,0" fill="#000"/></svg>
<span class="t" style="left:519.51px;top:791px;line-height:13px;letter-spacing:-0.55px;transform:scaleY(1.125);transform-origin:0 10px;">NOP</span>
<div class="e" style="left:549px;top:786px;width:38px;height:20px;"></div>
<span class="t" style="left:577.50px;top:791px;line-height:13px;transform:scaleY(1.125);transform-origin:0 10px;">1</span>
<div class="b" style="left:587px;top:786px;width:11px;height:10px;"></div>
<div class="b" style="left:587px;top:796px;width:11px;height:10px;"></div>
<svg style="left:590.0px;top:789.5px" width="5" height="3"><polygon points="0,3 2.5,0 5,3" fill="#000"/></svg>
<svg style="left:590.0px;top:799.5px" width="5" height="3"><polygon points="0,0 2.5,3 5,0" fill="#000"/></svg>
<span class="t" style="left:602.14px;top:768px;line-height:13px;letter-spacing:-0.55px;transform:scaleY(1.125);transform-origin:0 10px;">SFL</span>
<div class="e" style="left:623px;top:764px;width:46px;height:20px;"></div>
<span class="t" style="left:655.31px;top:768px;line-height:13px;letter-spacing:-0.55px;transform:scaleY(1.125);transform-origin:0 10px;">0s</span>
<div class="b" style="left:669px;top:764px;width:11px;height:10px;"></div>
<div class="b" style="left:669px;top:774px;width:11px;height:10px;"></div>
<svg style="left:672.0px;top:767.5px" width="5" height="3"><polygon points="0,3 2.5,0 5,3" fill="#000"/></svg>
<svg style="left:672.0px;top:777.5px" width="5" height="3"><polygon points="0,0 2.5,3 5,0" fill="#000"/></svg>
<span class="t" style="left:602.51px;top:791px;line-height:13px;letter-spacing:-0.55px;transform:scaleY(1.125);transform-origin:0 10px;">NOS</span>
<div class="e" style="left:632px;top:786px;width:37px;height:20px;"></div>
<span class="t" style="left:660.50px;top:791px;line-height:13px;transform:scaleY(1.125);transform-origin:0 10px;">1</span>
<div class="b" style="left:669px;top:786px;width:11px;height:10px;"></div>
<div class="b" style="left:669px;top:796px;width:11px;height:10px;"></div>
<svg style="left:672.0px;top:789.5px" width="5" height="3"><polygon points="0,3 2.5,0 5,3" fill="#000"/></svg>
<svg style="left:672.0px;top:799.5px" width="5" height="3"><polygon points="0,0 2.5,3 5,0" fill="#000"/></svg>
<div class="e" style="left:686px;top:701px;width:82px;height:20px;"></div>
<span class="t" style="left:734.00px;top:706px;line-height:13px;color:#808080;letter-spacing:-0.44px;transform:scaleY(1.125);transform-origin:0 10px;">7,44us</span>
<div class="b" style="left:769px;top:701px;width:35px;height:20px;"></div>
<span class="t" style="left:776.00px;top:706px;line-height:13px;letter-spacing:-0.28px;transform:scaleY(1.125);transform-origin:0 10px;">Auto</span>
<div class="k" style="left:686px;top:723px;width:118px;height:16px;"></div>
<div class="b" style="left:686px;top:723px;width:16px;height:16px;"></div>
<div class="b" style="left:788px;top:723px;width:16px;height:16px;"></div>
<svg style="left:692px;top:728.5px" width="4" height="7"><polygon points="4,0 0,3.5 4,7" fill="#fff"/></svg>
<svg style="left:691px;top:727.5px" width="4" height="7"><polygon points="4,0 0,3.5 4,7" fill="#808080"/></svg>
<svg style="left:796px;top:728.5px" width="4" height="7"><polygon points="0,0 4,3.5 0,7" fill="#fff"/></svg>
<svg style="left:795px;top:727.5px" width="4" height="7"><polygon points="0,0 4,3.5 0,7" fill="#808080"/></svg>
<div class="e" style="left:686px;top:767px;width:70px;height:20px;"></div>
<span class="t" style="left:709.80px;top:772px;line-height:13px;letter-spacing:-0.32px;transform:scaleY(1.125);transform-origin:0 10px;">320,23us</span>
<div class="b" style="left:757px;top:767px;width:29px;height:20px;"></div>
<span class="t" style="left:764.50px;top:772px;line-height:13px;letter-spacing:-0.50px;transform:scaleY(1.125);transform-origin:0 10px;">Set</span>
<div class="b" style="left:787px;top:767px;width:17px;height:20px;"></div>
<span class="t" style="left:793.60px;top:772px;line-height:13px;transform:scaleY(1.125);transform-origin:0 10px;">s</span>
<div class="k" style="left:686px;top:789px;width:118px;height:16px;"></div>
<div class="b" style="left:686px;top:789px;width:16px;height:16px;"></div>
<div class="b" style="left:788px;top:789px;width:16px;height:16px;"></div>
<svg style="left:691px;top:793.5px" width="4" height="7"><polygon points="4,0 0,3.5 4,7" fill="#000"/></svg>
<svg style="left:795px;top:793.5px" width="4" height="7"><polygon points="0,0 4,3.5 0,7" fill="#000"/></svg>
<div class="b" style="left:772px;top:789px;width:15px;height:16px;"></div>
</div>
</body></html>
